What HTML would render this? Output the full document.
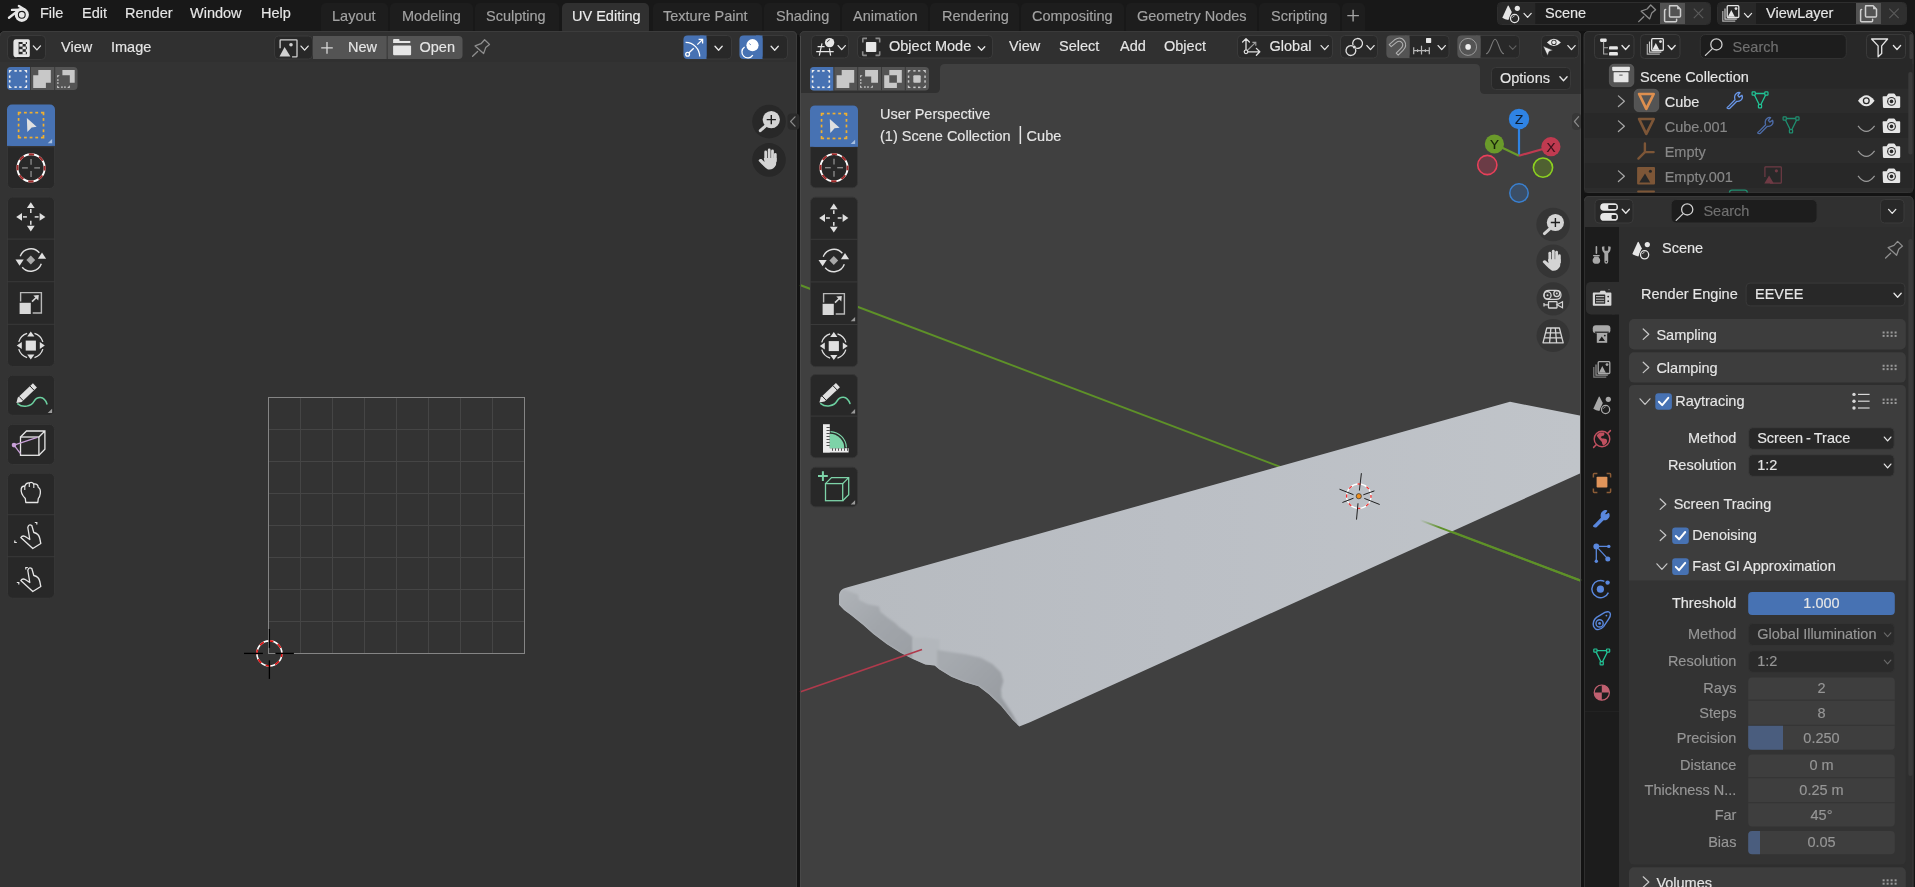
<!DOCTYPE html>
<html><head><meta charset="utf-8"><style>
html,body{margin:0;padding:0;background:#181818;overflow:hidden;}
svg{display:block;will-change:transform;} text{stroke-width:0.15px;} svg{font-family:"Liberation Sans",sans-serif;font-size:14.5px;}
</style></head><body>
<svg width="1915" height="887" viewBox="0 0 1915 887">
<rect x="0" y="0" width="1915" height="887" fill="#131313"/>
<rect x="0" y="0" width="1915" height="31" fill="#181818"/>
<circle cx="21.8" cy="14.8" r="7.1" fill="#e6e6e6"/>
<circle cx="21.8" cy="14.8" r="3.4" fill="#e6e6e6" stroke="#181818" stroke-width="1.1"/>
<path d="M9,17.7 L16.8,11.6" fill="none" stroke="#e6e6e6" stroke-width="2.4" stroke-linecap="round" stroke-linejoin="round"/>
<path d="M12,9.9 L20.5,9.7" fill="none" stroke="#e6e6e6" stroke-width="2.4" stroke-linecap="round" stroke-linejoin="round"/>
<path d="M18.9,6 L25,9.8" fill="none" stroke="#e6e6e6" stroke-width="2.4" stroke-linecap="round" stroke-linejoin="round"/>
<text x="40" y="18.3" fill="#e6e6e6" stroke="#e6e6e6">File</text>
<text x="82" y="18.3" fill="#e6e6e6" stroke="#e6e6e6">Edit</text>
<text x="125" y="18.3" fill="#e6e6e6" stroke="#e6e6e6">Render</text>
<text x="190" y="18.3" fill="#e6e6e6" stroke="#e6e6e6">Window</text>
<text x="261" y="18.3" fill="#e6e6e6" stroke="#e6e6e6">Help</text>
<rect x="321" y="3" width="67" height="32" fill="#1d1d1d" rx="5"/>
<text x="332" y="21" fill="#a3a3a3" stroke="#a3a3a3">Layout</text>
<rect x="390" y="3" width="83" height="32" fill="#1d1d1d" rx="5"/>
<text x="402" y="21" fill="#a3a3a3" stroke="#a3a3a3">Modeling</text>
<rect x="475" y="3" width="84" height="32" fill="#1d1d1d" rx="5"/>
<text x="486" y="21" fill="#a3a3a3" stroke="#a3a3a3">Sculpting</text>
<rect x="562" y="3" width="87" height="32" fill="#303030" rx="5"/>
<text x="572" y="21" fill="#ececec" stroke="#ececec">UV Editing</text>
<rect x="653" y="3" width="109" height="32" fill="#1d1d1d" rx="5"/>
<text x="663" y="21" fill="#a3a3a3" stroke="#a3a3a3">Texture Paint</text>
<rect x="764" y="3" width="76" height="32" fill="#1d1d1d" rx="5"/>
<text x="776" y="21" fill="#a3a3a3" stroke="#a3a3a3">Shading</text>
<rect x="842" y="3" width="86" height="32" fill="#1d1d1d" rx="5"/>
<text x="853" y="21" fill="#a3a3a3" stroke="#a3a3a3">Animation</text>
<rect x="930" y="3" width="89" height="32" fill="#1d1d1d" rx="5"/>
<text x="942" y="21" fill="#a3a3a3" stroke="#a3a3a3">Rendering</text>
<rect x="1021" y="3" width="103" height="32" fill="#1d1d1d" rx="5"/>
<text x="1032" y="21" fill="#a3a3a3" stroke="#a3a3a3">Compositing</text>
<rect x="1126" y="3" width="131" height="32" fill="#1d1d1d" rx="5"/>
<text x="1137" y="21" fill="#a3a3a3" stroke="#a3a3a3">Geometry Nodes</text>
<rect x="1259" y="3" width="81" height="32" fill="#1d1d1d" rx="5"/>
<text x="1271" y="21" fill="#a3a3a3" stroke="#a3a3a3">Scripting</text>
<rect x="1342" y="3" width="23" height="32" fill="#1d1d1d" rx="5"/>
<path d="M1347.3,15.6 h11.6 M1353.1,9.8 v11.6" fill="none" stroke="#a3a3a3" stroke-width="1.4"/>
<rect x="1497.5" y="2.5" width="213" height="22" fill="#1d1d1d" rx="4" stroke="#2e2e2e" stroke-width="1"/>
<rect x="1498" y="3" width="37.5" height="21" fill="#282828" rx="3.5"/>
<rect x="1530" y="3" width="5.5" height="21" fill="#282828"/>
<rect x="1535.5" y="3" width="124.5" height="21" fill="#1d1d1d"/>
<rect x="1660" y="3" width="25" height="21" fill="#525252"/>
<rect x="1685" y="3" width="25" height="21" fill="#2f2f2f" rx="3.5"/>
<rect x="1685" y="3" width="5" height="21" fill="#2f2f2f"/>
<path d="M1507.8,5.7 Q1508.2,5.1 1508.6,5.7 L1511.8,11.9 L1508.4,20.1 Q1505,19.5 1502.3,17.7 Z" fill="#e6e6e6"/>
<circle cx="1517.3" cy="8.3" r="2.6" fill="#e6e6e6"/>
<circle cx="1514.6" cy="18.5" r="5.2" fill="#282828"/>
<circle cx="1514.6" cy="18.5" r="4.1" fill="none" stroke="#e6e6e6" stroke-width="1.3"/>
<path d="M1512.6,17.3 q0.6,-1 1.6,-1.4" fill="none" stroke="#e6e6e6" stroke-width="0.9" stroke-linecap="round" stroke-linejoin="round"/>
<path d="M1524,13.4 L1527.6,17.4 L1531.2,13.4" fill="none" stroke="#e6e6e6" stroke-width="1.2" stroke-linecap="round" stroke-linejoin="round"/>
<text x="1545" y="18.2" fill="#e6e6e6" stroke="#e6e6e6">Scene</text>
<path d="M1650.7,5 L1655.6,9.7 L1651.8,12.9 L1649.7,18.9 L1641.2,11.2 L1647.1,9 Z" fill="none" stroke="#8a8a8a" stroke-width="1.3" stroke-linecap="round" stroke-linejoin="round"/>
<line x1="1638.7" y1="21.6" x2="1643.7" y2="16.8" stroke="#8a8a8a" stroke-width="1.3" stroke-linecap="round"/>
<path d="M1669.6,5.8 h7.5 l3.4,3.4 v6.8 q0,1 -1,1 h-9 q-1,0 -1,-1 v-9.2 q0,-1 1,-1 Z" fill="none" stroke="#cfcfcf" stroke-width="1.5" stroke-linecap="round" stroke-linejoin="round"/>
<path d="M1677.1,5.8 l3.4,3.4 h-3.4 Z" fill="#cfcfcf"/>
<path d="M1665.6,9.6 q-1,0 -1,1 v10.2 q0,1 1,1 h10 q1,0 1,-1 v-1.6" fill="none" stroke="#cfcfcf" stroke-width="1.5" stroke-linecap="round" stroke-linejoin="round"/>
<path d="M1693.8,8.7 L1703.2,18.1 M1703.2,8.7 L1693.8,18.1" fill="none" stroke="#5a5a5a" stroke-width="1.2"/>
<rect x="1717.5" y="2.5" width="189" height="22" fill="#1d1d1d" rx="4" stroke="#2e2e2e" stroke-width="1"/>
<rect x="1718" y="3" width="38" height="21" fill="#282828" rx="3.5"/>
<rect x="1751" y="3" width="5" height="21" fill="#282828"/>
<rect x="1756" y="3" width="100" height="21" fill="#1d1d1d"/>
<rect x="1856" y="3" width="25" height="21" fill="#525252"/>
<rect x="1881" y="3" width="25" height="21" fill="#2f2f2f" rx="3.5"/>
<rect x="1881" y="3" width="5" height="21" fill="#2f2f2f"/>
<path d="M1722.8,11 v10.2 h12.5" fill="none" stroke="#e6e6e6" stroke-width="1.2" opacity="0.7"/>
<path d="M1725,8.6 v10.6 h11.8" fill="none" stroke="#e6e6e6" stroke-width="1.2" opacity="0.85"/>
<rect x="1727.2" y="5.7" width="11.6" height="11.8" fill="#282828" rx="1" stroke="#e6e6e6" stroke-width="1.3"/>
<path d="M1727.9,16.8 L1731.3,10 L1734.8,16.8 Z" fill="#e6e6e6"/>
<circle cx="1736" cy="8.6" r="1.4" fill="#e6e6e6"/>
<path d="M1744.4,13.4 L1748,17.4 L1751.6,13.4" fill="none" stroke="#e6e6e6" stroke-width="1.2" stroke-linecap="round" stroke-linejoin="round"/>
<text x="1766" y="18.2" fill="#e6e6e6" stroke="#e6e6e6">ViewLayer</text>
<path d="M1865.6,5.8 h7.5 l3.4,3.4 v6.8 q0,1 -1,1 h-9 q-1,0 -1,-1 v-9.2 q0,-1 1,-1 Z" fill="none" stroke="#cfcfcf" stroke-width="1.5" stroke-linecap="round" stroke-linejoin="round"/>
<path d="M1873.1,5.8 l3.4,3.4 h-3.4 Z" fill="#cfcfcf"/>
<path d="M1861.6,9.6 q-1,0 -1,1 v10.2 q0,1 1,1 h10 q1,0 1,-1 v-1.6" fill="none" stroke="#cfcfcf" stroke-width="1.5" stroke-linecap="round" stroke-linejoin="round"/>
<path d="M1889.3,8.7 L1898.7,18.1 M1898.7,8.7 L1889.3,18.1" fill="none" stroke="#5a5a5a" stroke-width="1.2"/>
<rect x="0" y="31" width="797" height="900" fill="#333333" rx="5"/>
<rect x="0" y="31" width="797" height="31" fill="#303030" rx="5"/>
<rect x="0" y="40" width="797" height="22" fill="#303030"/>
<path d="M0,36 Q0,31.5 5,31.5 L792,31.5 Q796.5,31.5 796.5,36 L796.5,887" fill="none" stroke="#3c3c3c" stroke-width="1"/>
<rect x="7.5" y="35.5" width="38" height="24" fill="#282828" rx="4" stroke="#3a3a3a" stroke-width="1"/>
<path d="M14.6,39.2 h13.6 q1.6,0 1.6,1.6 v14.6 q0,1.6 -1.6,1.6 h-11.2 v-2.8 h9.9 v-12.2 h-8.3 v12.2 q0,3 -2.6,3 q-2.6,0 -2.6,-3 v-11.7 q0,-3.3 2.6,-3.3 Z" fill="#e6e6e6"/>
<rect x="22.6" y="41.4" width="3.2" height="2.6" fill="#e6e6e6"/>
<rect x="19.4" y="44" width="3.2" height="2.6" fill="#e6e6e6"/>
<rect x="25.8" y="44" width="3.2" height="2.6" fill="#e6e6e6"/>
<rect x="22.6" y="46.6" width="3.2" height="2.6" fill="#e6e6e6"/>
<rect x="19.4" y="49.2" width="3.2" height="2.6" fill="#e6e6e6"/>
<rect x="25.8" y="49.2" width="3.2" height="2.6" fill="#e6e6e6"/>
<rect x="22.6" y="51.8" width="3.2" height="2.6" fill="#e6e6e6"/>
<path d="M33.3,45.9 L36.9,49.9 L40.5,45.9" fill="none" stroke="#e6e6e6" stroke-width="1.3" stroke-linecap="round" stroke-linejoin="round"/>
<text x="61" y="51.5" fill="#e6e6e6" stroke="#e6e6e6">View</text>
<text x="111" y="51.5" fill="#e6e6e6" stroke="#e6e6e6">Image</text>
<rect x="274.5" y="36" width="38" height="23" fill="#282828" rx="4" stroke="#3a3a3a" stroke-width="1"/>
<path d="M280.1,48.3 V40.5 q0,-0.6 0.6,-0.6 h15.7 q0.6,0 0.6,0.6 v15.8 q0,0.6 -0.6,0.6 h-4.3" fill="none" stroke="#d0d0d0" stroke-width="1.3"/>
<path d="M279.5,56.6 L284.6,47.1 L290.4,56.6 Z" fill="#d0d0d0"/>
<circle cx="291" cy="44.8" r="1.8" fill="#d0d0d0"/>
<path d="M301,46.1 L304.6,50.1 L308.2,46.1" fill="none" stroke="#e6e6e6" stroke-width="1.3" stroke-linecap="round" stroke-linejoin="round"/>
<rect x="313" y="36" width="74" height="23" fill="#545454"/>
<rect x="387.5" y="36" width="75" height="23" fill="#545454" rx="4"/>
<rect x="387.5" y="36" width="8" height="23" fill="#545454"/>
<rect x="386.6" y="36" width="1" height="23" fill="#3a3a3a"/>
<path d="M321.2,47.9 h11.6 M327,42.1 v11.6" fill="none" stroke="#d8d8d8" stroke-width="1.3"/>
<text x="348" y="51.5" fill="#e6e6e6" stroke="#e6e6e6">New</text>
<text x="419.5" y="51.5" fill="#e6e6e6" stroke="#e6e6e6">Open</text>
<path d="M393.1,41.8 V40 q0,-0.9 0.9,-0.9 h4.6 q0.9,0 0.9,0.9 v1 h10.8 v2.1 h-17.2 Z" fill="#e6e6e6"/>
<rect x="393.1" y="45.4" width="18" height="9.9" fill="#e6e6e6" rx="1"/>
<path d="M484.6,39.7 L489.5,44.4 L485.7,47.6 L483.6,53.6 L475.1,45.9 L481,43.7 Z" fill="none" stroke="#8f8f8f" stroke-width="1.3" stroke-linecap="round" stroke-linejoin="round"/>
<line x1="472.6" y1="56.3" x2="477.6" y2="51.5" stroke="#8f8f8f" stroke-width="1.3" stroke-linecap="round"/>
<rect x="683.5" y="35.5" width="48" height="23.5" fill="#282828" rx="4" stroke="#3a3a3a" stroke-width="1"/>
<rect x="683.5" y="35.5" width="23" height="23.5" fill="#4772b3" rx="4"/>
<rect x="700" y="35.5" width="6.5" height="23.5" fill="#4772b3"/>
<path d="M685.6,42.4 A14.2,14.2 0 0 1 699.7,56.6" fill="none" stroke="#ffffff" stroke-width="1.3"/>
<circle cx="687.6" cy="54.2" r="1.9" fill="none" stroke="#ffffff" stroke-width="1.3"/>
<line x1="689" y1="52.8" x2="693.7" y2="48.2" stroke="#ffffff" stroke-width="1.3"/>
<line x1="697.3" y1="44.6" x2="702.3" y2="39.7" stroke="#ffffff" stroke-width="1.3"/>
<path d="M698.6,39.4 h4 v4" fill="none" stroke="#ffffff" stroke-width="1.3"/>
<path d="M715,46.2 L718.6,50.2 L722.2,46.2" fill="none" stroke="#e6e6e6" stroke-width="1.3" stroke-linecap="round" stroke-linejoin="round"/>
<rect x="739.5" y="35.5" width="48" height="23.5" fill="#282828" rx="4" stroke="#3a3a3a" stroke-width="1"/>
<rect x="739.5" y="35.5" width="23" height="23.5" fill="#4772b3" rx="4"/>
<rect x="756" y="35.5" width="6.5" height="23.5" fill="#4772b3"/>
<circle cx="752.5" cy="45.2" r="6.1" fill="#ffffff"/>
<path d="M744.6,47 A5.9,5.9 0 1 0 752.8,55.1" fill="none" stroke="#ffffff" stroke-width="1.3"/>
<path d="M749.3,43.6 l1.5,1.2" fill="none" stroke="#4772b3" stroke-width="0.9"/>
<path d="M771.1,46.2 L774.7,50.2 L778.3,46.2" fill="none" stroke="#e6e6e6" stroke-width="1.3" stroke-linecap="round" stroke-linejoin="round"/>
<rect x="7" y="67" width="70.5" height="23" fill="#545454" rx="4"/>
<rect x="7" y="67" width="23" height="23" fill="#4772b3" rx="4"/>
<rect x="26" y="67" width="4" height="23" fill="#4772b3"/>
<rect x="30" y="67" width="1" height="23" fill="#3a3a3a"/>
<rect x="54.2" y="67" width="1" height="23" fill="#3a3a3a"/>
<path d="M8.9,70.1 h3.1 l-3.1,3.1 Z" fill="#f0f0f0"/>
<path d="M27.1,70.1 v3.1 l-3.1,-3.1 Z" fill="#f0f0f0"/>
<path d="M8.9,87.9 v-3.1 l3.1,3.1 Z" fill="#f0f0f0"/>
<path d="M27.1,87.9 h-3.1 l3.1,-3.1 Z" fill="#f0f0f0"/>
<rect x="14.4" y="70.1" width="2.4" height="1.6" fill="#f0f0f0"/>
<rect x="14.4" y="86.3" width="2.4" height="1.6" fill="#f0f0f0"/>
<rect x="8.9" y="75.52" width="1.6" height="2.32" fill="#f0f0f0"/>
<rect x="25.5" y="75.52" width="1.6" height="2.32" fill="#f0f0f0"/>
<rect x="19.2" y="70.1" width="2.4" height="1.6" fill="#f0f0f0"/>
<rect x="19.2" y="86.3" width="2.4" height="1.6" fill="#f0f0f0"/>
<rect x="8.9" y="80.16" width="1.6" height="2.32" fill="#f0f0f0"/>
<rect x="25.5" y="80.16" width="1.6" height="2.32" fill="#f0f0f0"/>
<path d="M33.2,75.2 h5.1 v-5.1 h12.5 v12.7 h-4.9 v5.1 h-12.7 Z" fill="#c8c8c8"/>
<path d="M62.4,70.1 h12.3 v12.7 h-4.9 v-7.6 h-7.4 Z" fill="#c8c8c8"/>
<path d="M57.1,75.2 h2.6 l-2.6,2.6 Z" fill="#c8c8c8"/>
<path d="M57.1,87.9 v-2.6 l2.6,2.6 Z" fill="#c8c8c8"/>
<path d="M69.8,87.9 h-2.6 l2.6,-2.6 Z" fill="#c8c8c8"/>
<rect x="61.2" y="86.4" width="1.5" height="1.5" fill="#c8c8c8"/>
<rect x="57.1" y="79.3" width="1.5" height="1.5" fill="#c8c8c8"/>
<rect x="64.2" y="86.4" width="1.5" height="1.5" fill="#c8c8c8"/>
<rect x="57.1" y="82.3" width="1.5" height="1.5" fill="#c8c8c8"/>
<rect x="7.5" y="105" width="47" height="83.5" fill="#282828" rx="5" stroke="#363636" stroke-width="1"/>
<rect x="7" y="146.25" width="48" height="1" fill="#3a3a3a"/>
<rect x="7.5" y="197" width="47" height="169.4" fill="#282828" rx="5" stroke="#363636" stroke-width="1"/>
<rect x="7" y="238.6" width="48" height="1" fill="#3a3a3a"/>
<rect x="7" y="281.2" width="48" height="1" fill="#3a3a3a"/>
<rect x="7" y="323.8" width="48" height="1" fill="#3a3a3a"/>
<rect x="7.5" y="375.2" width="47" height="40.1" fill="#282828" rx="5" stroke="#363636" stroke-width="1"/>
<rect x="7.5" y="424.4" width="47" height="40.1" fill="#282828" rx="5" stroke="#363636" stroke-width="1"/>
<rect x="7.5" y="473.2" width="47" height="125" fill="#282828" rx="5" stroke="#363636" stroke-width="1"/>
<rect x="7" y="514.2" width="48" height="1" fill="#3a3a3a"/>
<rect x="7" y="556.2" width="48" height="1" fill="#3a3a3a"/>
<rect x="7" y="104.5" width="48" height="41.4" fill="#4772b3" rx="5"/>
<rect x="7" y="134" width="48" height="11.9" fill="#4772b3"/>
<path d="M18.6,115.2 V112.65 H21.15 M40.95,112.65 H43.5 V115.2 M43.5,135 V137.55 H40.95 M21.15,137.55 H18.6 V135" fill="none" stroke="#f0b030" stroke-width="1.7"/>
<rect x="23.98" y="111.8" width="2.83" height="1.7" fill="#f0b030"/>
<rect x="23.98" y="136.7" width="2.83" height="1.7" fill="#f0b030"/>
<rect x="17.75" y="118.03" width="1.7" height="2.83" fill="#f0b030"/>
<rect x="42.65" y="118.03" width="1.7" height="2.83" fill="#f0b030"/>
<rect x="29.64" y="111.8" width="2.83" height="1.7" fill="#f0b030"/>
<rect x="29.64" y="136.7" width="2.83" height="1.7" fill="#f0b030"/>
<rect x="17.75" y="123.69" width="1.7" height="2.83" fill="#f0b030"/>
<rect x="42.65" y="123.69" width="1.7" height="2.83" fill="#f0b030"/>
<rect x="35.29" y="111.8" width="2.83" height="1.7" fill="#f0b030"/>
<rect x="35.29" y="136.7" width="2.83" height="1.7" fill="#f0b030"/>
<rect x="17.75" y="129.34" width="1.7" height="2.83" fill="#f0b030"/>
<rect x="42.65" y="129.34" width="1.7" height="2.83" fill="#f0b030"/>
<path d="M26.85,118 L36.65,126.8 L31.65,127.4 L27.35,132.1 Z" fill="#e0e0e0"/>
<path d="M52.1,139 L52.1,143.3 L47.7,143.3 Z" fill="#a8c0e0"/>
<circle cx="31.05" cy="167.9" r="13.6" fill="none" stroke="#ffffff" stroke-width="1.9"/>
<circle cx="31.05" cy="167.9" r="13.6" fill="none" stroke="#a02a2a" stroke-width="1.9" stroke-dasharray="5.34" stroke-dashoffset="2.67"/>
<line x1="22.05" y1="167.9" x2="27.85" y2="167.9" stroke="#8f8f8f" stroke-width="1.3"/>
<line x1="34.25" y1="167.9" x2="40.05" y2="167.9" stroke="#8f8f8f" stroke-width="1.3"/>
<line x1="31.05" y1="158.9" x2="31.05" y2="164.7" stroke="#8f8f8f" stroke-width="1.3"/>
<line x1="31.05" y1="171.1" x2="31.05" y2="176.9" stroke="#8f8f8f" stroke-width="1.3"/>
<path d="M30.8,202.3 L26.9,208.1 L34.7,208.1 Z" fill="#e0e0e0"/>
<line x1="30.8" y1="209.1" x2="30.8" y2="213" stroke="#e0e0e0" stroke-width="1.5"/>
<path d="M30.8,231.5 L26.9,225.7 L34.7,225.7 Z" fill="#e0e0e0"/>
<line x1="30.8" y1="224.7" x2="30.8" y2="220.8" stroke="#e0e0e0" stroke-width="1.5"/>
<path d="M16.2,216.9 L22,213 L22,220.8 Z" fill="#e0e0e0"/>
<line x1="23" y1="216.9" x2="26.9" y2="216.9" stroke="#e0e0e0" stroke-width="1.5"/>
<path d="M45.4,216.9 L39.6,213 L39.6,220.8 Z" fill="#e0e0e0"/>
<line x1="38.6" y1="216.9" x2="34.7" y2="216.9" stroke="#e0e0e0" stroke-width="1.5"/>
<path d="M20.28,256.17 A11.2,11.2 0 0 1 39.38,252.8" fill="none" stroke="#e0e0e0" stroke-width="1.4"/>
<path d="M41.32,263.83 A11.2,11.2 0 0 1 22.22,267.2" fill="none" stroke="#e0e0e0" stroke-width="1.4"/>
<path d="M15.5,259.5 h8.2 l-4.1,6.2 Z" fill="#e0e0e0"/>
<path d="M46.1,258.8 h-8.2 l4.1,-6.2 Z" fill="#e0e0e0"/>
<path d="M30.8,255.6 L35.2,260 L30.8,264.4 L26.4,260 Z" fill="#a8a8a8"/>
<path d="M20.6,301.5 V292.6 H41.4 V313 H32.7" fill="none" stroke="#b8b8b8" stroke-width="1.4"/>
<rect x="19.6" y="302.8" width="11.2" height="11.2" fill="#d8d8d8"/>
<line x1="32" y1="301.6" x2="37.1" y2="296.7" stroke="#d8d8d8" stroke-width="1.5"/>
<path d="M38.8,295 L38.3,300.5 L33.3,295.5 Z" fill="#d8d8d8"/>
<path d="M42.85,341.82 A12.6,12.6 0 0 0 34.48,333.45" fill="none" stroke="#e0e0e0" stroke-width="1.3"/>
<path d="M27.12,333.45 A12.6,12.6 0 0 0 18.75,341.82" fill="none" stroke="#e0e0e0" stroke-width="1.3"/>
<path d="M18.75,349.18 A12.6,12.6 0 0 0 27.12,357.55" fill="none" stroke="#e0e0e0" stroke-width="1.3"/>
<path d="M34.48,357.55 A12.6,12.6 0 0 0 42.85,349.18" fill="none" stroke="#e0e0e0" stroke-width="1.3"/>
<rect x="25.7" y="340.6" width="10.2" height="10" fill="#e0e0e0"/>
<path d="M30.8,331.5 l3.6,5 h-7.2 Z M30.8,359.5 l3.6,-5 h-7.2 Z M16.8,345.5 l5,3.6 v-7.2 Z M44.8,345.5 l-5,3.6 v-7.2 Z" fill="#e0e0e0"/>
<path d="M16.4,402.9 L21.66,401.92 L36.93,387.49 L32.94,383.28 L17.68,397.7 Z" fill="#e0e0e0"/>
<line x1="23.12" y1="400.54" x2="19.13" y2="396.33" stroke="#282828" stroke-width="1"/>
<line x1="34.02" y1="390.24" x2="30.03" y2="386.03" stroke="#282828" stroke-width="1"/>
<path d="M17.8,403.9 C23,408.3 31,406.3 34,401.3 C37,396.3 44,395.3 47,403.9" fill="none" stroke="#6cd0a0" stroke-width="1.5" stroke-linecap="round" stroke-linejoin="round"/>
<path d="M52.1,408.8 L52.1,413.1 L47.7,413.1 Z" fill="#9a9a9a"/>
<rect x="20.5" y="437" width="18.4" height="18.3" fill="none" stroke="#e6e6e6" stroke-width="1.3"/>
<path d="M20.5,437 l6,-6 h18.4 v18.3 l-6,6 M38.9,437 l6,-6" fill="none" stroke="#e6e6e6" stroke-width="1.3"/>
<line x1="14" y1="445.1" x2="37.3" y2="437.3" stroke="#c8a0d8" stroke-width="1.3"/>
<line x1="14" y1="445.1" x2="20.5" y2="453.7" stroke="#c8a0d8" stroke-width="1.3"/>
<circle cx="14" cy="445.1" r="2.3" fill="#c8a0d8"/>
<path d="M25.8,502.5 L25.3,498.5 Q20.3,493.5 21.3,488.5 Q21.8,486 24.8,486 Q26.3,482.5 29.3,483 Q31.8,481.5 33.8,484 Q37.8,483.5 38.3,487.5 Q40.8,488.5 40.3,493.5 Q39.8,497.5 38.3,498.5 L37.8,502.5 Z" fill="none" stroke="#e6e6e6" stroke-width="1.3" stroke-linecap="round" stroke-linejoin="round"/>
<path d="M24.8,486 v4 M29.3,483 v4 M33.8,484 v4" fill="none" stroke="#e6e6e6" stroke-width="1.1"/>
<path d="M20.8,537.5 Q22.8,534.5 26.8,537.5 L29.8,539.5 L27.8,527.5 Q28.8,523.5 31.8,525.5 L33.8,532.5 Q38.8,533.5 39.8,538.5 L40.8,543.5 L32.8,548.5 Z" fill="none" stroke="#e6e6e6" stroke-width="1.3" stroke-linecap="round" stroke-linejoin="round"/>
<path d="M34.8,522.5 h2 v2 M14.8,540.5 v2 h2" fill="none" stroke="#e6e6e6" stroke-width="1.2"/>
<path d="M20.8,580.5 Q22.8,577.5 26.8,580.5 L29.8,582.5 L27.8,570.5 Q28.8,566.5 31.8,568.5 L33.8,575.5 Q38.8,576.5 39.8,581.5 L40.8,586.5 L32.8,591.5 Z" fill="none" stroke="#e6e6e6" stroke-width="1.3" stroke-linecap="round" stroke-linejoin="round"/>
<path d="M25.8,569.5 v-2 h2 M16.8,582.5 h2 v2" fill="none" stroke="#e6e6e6" stroke-width="1.2"/>
<rect x="300" y="397" width="1" height="256" fill="#454545"/>
<rect x="268" y="429" width="256" height="1" fill="#454545"/>
<rect x="332" y="397" width="1" height="256" fill="#454545"/>
<rect x="268" y="461" width="256" height="1" fill="#454545"/>
<rect x="364" y="397" width="1" height="256" fill="#454545"/>
<rect x="268" y="493" width="256" height="1" fill="#454545"/>
<rect x="396" y="397" width="1" height="256" fill="#454545"/>
<rect x="268" y="525" width="256" height="1" fill="#454545"/>
<rect x="428" y="397" width="1" height="256" fill="#454545"/>
<rect x="268" y="557" width="256" height="1" fill="#454545"/>
<rect x="460" y="397" width="1" height="256" fill="#454545"/>
<rect x="268" y="589" width="256" height="1" fill="#454545"/>
<rect x="492" y="397" width="1" height="256" fill="#454545"/>
<rect x="268" y="621" width="256" height="1" fill="#454545"/>
<rect x="268.5" y="397.5" width="256" height="256" fill="none" stroke="#858585" stroke-width="1"/>
<circle cx="269.4" cy="653.4" r="12.5" fill="none" stroke="#ffffff" stroke-width="1.6"/>
<circle cx="269.4" cy="653.4" r="12.5" fill="none" stroke="#e01010" stroke-width="1.6" stroke-dasharray="4.91" stroke-dashoffset="1.23"/>
<line x1="244" y1="653.4" x2="262.9" y2="653.4" stroke="#000000" stroke-width="1.3"/>
<line x1="275.4" y1="653.4" x2="293.9" y2="653.4" stroke="#000000" stroke-width="1.3"/>
<line x1="269.4" y1="629" x2="269.4" y2="647.9" stroke="#000000" stroke-width="1.3"/>
<line x1="269.4" y1="660.3" x2="269.4" y2="678.9" stroke="#000000" stroke-width="1.3"/>
<circle cx="769" cy="121.6" r="16.8" fill="#282828"/>
<circle cx="771.3" cy="119.6" r="8.6" fill="#d4d4d4"/>
<path d="M766.7,119.6 h9.2 M771.3,115 v9.2" fill="none" stroke="#1e1e1e" stroke-width="1.4"/>
<line x1="760.3" y1="130.7" x2="765.6" y2="125.9" stroke="#d4d4d4" stroke-width="3" stroke-linecap="round"/>
<circle cx="769" cy="159.9" r="16.8" fill="#282828"/>
<line x1="765.7" y1="151.9" x2="765.7" y2="158.9" stroke="#d4d4d4" stroke-width="2.8" stroke-linecap="round"/>
<line x1="769.2" y1="149.9" x2="769.2" y2="158.9" stroke="#d4d4d4" stroke-width="2.8" stroke-linecap="round"/>
<line x1="772.5" y1="150.9" x2="772.5" y2="158.9" stroke="#d4d4d4" stroke-width="2.8" stroke-linecap="round"/>
<line x1="775.3" y1="154.4" x2="775.3" y2="160.9" stroke="#d4d4d4" stroke-width="2.8" stroke-linecap="round"/>
<path d="M763.8,157.9 L776.6,157.9 L776,164.9 Q773,170.4 768,169.4 Q765,167.9 758.5,160.7 Q759,158.4 761.5,159.1 L764.5,161.9 Z" fill="#d4d4d4"/>
<rect x="787.5" y="113.4" width="12" height="16.3" fill="#2a2a2a" rx="4"/>
<path d="M795,116.8 L790.6,121.5 L795,126.2" fill="none" stroke="#8a8a8a" stroke-width="1.2" stroke-linecap="round" stroke-linejoin="round"/>
<rect x="800" y="31" width="781" height="900" fill="#404040" rx="5"/>
<line x1="800" y1="285" x2="1581" y2="580.7" stroke="#5e9128" stroke-width="2"/>
<defs><linearGradient id="slabg" x1="839" y1="0" x2="1581" y2="0" gradientUnits="userSpaceOnUse"><stop offset="0" stop-color="#b7bbc0"/><stop offset="0.45" stop-color="#bbbfc5"/><stop offset="1" stop-color="#c0c4c9"/></linearGradient><linearGradient id="sideg" x1="0" y1="0" x2="0.25" y2="1"><stop offset="0" stop-color="#b4b8bd"/><stop offset="0.6" stop-color="#a3a7ac"/><stop offset="1" stop-color="#9a9ea3"/></linearGradient><radialGradient id="shade" cx="930" cy="640" r="120" gradientUnits="userSpaceOnUse"><stop offset="0" stop-color="#9da1a6" stop-opacity="0.35"/><stop offset="1" stop-color="#9da1a6" stop-opacity="0"/></radialGradient><filter id="soft" x="-5%" y="-5%" width="110%" height="110%"><feGaussianBlur stdDeviation="0.9"/></filter></defs>
<path d="M846,587.8 L1510,401.8 L1581,415.8 L1581,473 L1030,722.3 L1019.3,726.4 L1012.8,720 L1001,705.7 L989.2,694.5 L978.5,686.2 L964.3,682.1 L951.3,676.7 L939.5,669.6 L934.7,665.5 L925.3,664.5 L912.9,658.9 L900.5,652.7 L887,644.2 L873.4,634.1 L863.3,625.1 L850.9,614.9 L844.1,609.9 L839.1,604.8 L839.1,594.7 Q840,589.2 846,587.8 Z" fill="url(#slabg)"/>
<clipPath id="slabclip"><path d="M846,587.8 L1510,401.8 L1581,415.8 L1581,473 L1030,722.3 L1019.3,726.4 L1012.8,720 L1001,705.7 L989.2,694.5 L978.5,686.2 L964.3,682.1 L951.3,676.7 L939.5,669.6 L934.7,665.5 L925.3,664.5 L912.9,658.9 L900.5,652.7 L887,644.2 L873.4,634.1 L863.3,625.1 L850.9,614.9 L844.1,609.9 L839.1,604.8 L839.1,594.7 Q840,589.2 846,587.8 Z"/></clipPath>
<g clip-path="url(#slabclip)">
<linearGradient id="sideA" x1="845" y1="595" x2="905" y2="655" gradientUnits="userSpaceOnUse"><stop offset="0" stop-color="#adb1b6"/><stop offset="0.5" stop-color="#a2a6ab"/><stop offset="1" stop-color="#9ca0a5"/></linearGradient>
<linearGradient id="sideB" x1="950" y1="655" x2="1010" y2="715" gradientUnits="userSpaceOnUse"><stop offset="0" stop-color="#a6aaaf"/><stop offset="0.6" stop-color="#9ca0a5"/><stop offset="1" stop-color="#95999e"/></linearGradient>
<path d="M843,589 L839.1,594.7 L839.1,604.8 L844.1,609.9 L850.9,614.9 L863.3,625.1 L873.4,634.1 L887,644.2 L900.5,652.7 L912.9,658.9 L912.9,637.5 L906.1,631.8 L899.4,627.3 L894.9,622.8 L887,617.2 L880.2,611.6 L879.1,606.5 L867.8,604.2 L858.8,599.7 L858.2,594.7 Z" fill="url(#sideA)" filter="url(#soft)"/>
<path d="M912.9,637.5 L924.2,637.5 L939.5,639.5 L939.5,669.6 L934.7,665.5 L925.3,664.5 L912.9,658.9 Z" fill="#b3b7bc" filter="url(#soft)"/>
<path d="M937.1,650.1 L941.8,650.7 L965.5,654.3 L980.9,657.8 L992.7,664.3 L1001,672.6 L1003.4,680.9 L1001,689.2 L1001.6,697.5 L1011.7,712.8 L1019.3,726.4 L1012.8,720 L1001,705.7 L989.2,694.5 L978.5,686.2 L964.3,682.1 L951.3,676.7 L939.5,669.6 L937.1,667 Z" fill="url(#sideB)" filter="url(#soft)"/>
</g>
<line x1="800" y1="692" x2="922" y2="649.5" stroke="#b03a4c" stroke-width="1.8"/>
<linearGradient id="gfade" x1="1420" y1="0" x2="1440" y2="0" gradientUnits="userSpaceOnUse"><stop offset="0" stop-color="#5e9128" stop-opacity="0"/><stop offset="1" stop-color="#5e9128"/></linearGradient>
<line x1="1420" y1="520.1" x2="1581" y2="580.7" stroke="url(#gfade)" stroke-width="2"/>
<circle cx="1358.8" cy="496.2" r="12.2" fill="none" stroke="#ffffff" stroke-width="1.3"/>
<circle cx="1358.8" cy="496.2" r="12.2" fill="none" stroke="#f03030" stroke-width="1.3" stroke-dasharray="3.4 6.18" stroke-dashoffset="1.7"/>
<line x1="1361.4" y1="473.2" x2="1359.4" y2="490.5" stroke="#202020" stroke-width="1"/>
<line x1="1358" y1="503.3" x2="1356.5" y2="519.6" stroke="#202020" stroke-width="1"/>
<line x1="1339.5" y1="489.2" x2="1353.5" y2="494.7" stroke="#202020" stroke-width="1"/>
<line x1="1342.4" y1="502.5" x2="1353.5" y2="498.2" stroke="#202020" stroke-width="1"/>
<line x1="1363.3" y1="494.8" x2="1374.4" y2="490.9" stroke="#202020" stroke-width="1"/>
<line x1="1364.3" y1="498.4" x2="1379.7" y2="504.5" stroke="#202020" stroke-width="1"/>
<circle cx="1358.8" cy="496.2" r="2.6" fill="#f0901e" stroke="#303030" stroke-width="0.7"/>
<path d="M800,36 Q800,31 805,31 L1576,31 Q1581,31 1581,36 L1581,94 L1485,94 Q1480,94 1480,89 L1480,69 Q1480,64 1475,64 L945,64 Q940,64 940,69 L940,88 Q940,93 935,93 L800,93 Z" fill="#303030"/>
<path d="M800,36.5 Q800,31.5 805,31.5 L1576,31.5 Q1580.5,31.5 1580.5,36 L1580.5,887" fill="none" stroke="#3a3a3a" stroke-width="1"/>
<line x1="1580.5" y1="94" x2="1580.5" y2="887" stroke="#4a4a4a" stroke-width="1"/>
<line x1="800.5" y1="36" x2="800.5" y2="887" stroke="#494949" stroke-width="1"/>
<rect x="811.5" y="35.5" width="37" height="22.5" fill="#282828" rx="4" stroke="#3a3a3a" stroke-width="1"/>
<circle cx="829.6" cy="42.6" r="4.7" fill="#e6e6e6"/>
<path d="M827.4,41.8 q0.6,-1.6 2,-2" fill="none" stroke="#282828" stroke-width="0.9" stroke-linecap="round" stroke-linejoin="round"/>
<path d="M817.6,46.6 h7 M816.2,51.6 h17.5 M822,43.4 L819.3,55.6 M829.4,48.4 L830.6,55.6" fill="none" stroke="#e6e6e6" stroke-width="1.2"/>
<path d="M838.1,45.6 L841.7,49.6 L845.3,45.6" fill="none" stroke="#e6e6e6" stroke-width="1.3" stroke-linecap="round" stroke-linejoin="round"/>
<rect x="857.5" y="35.5" width="135" height="22.5" fill="#282828" rx="4" stroke="#3a3a3a" stroke-width="1"/>
<path d="M862.8,42.6 v-3.6 q0,-0.6 0.6,-0.6 h3.6 M875.5,38.4 h3.6 q0.6,0 0.6,0.6 v3.6 M879.7,51.2 v3.6 q0,0.6 -0.6,0.6 h-3.6 M866.9,55.4 h-3.6 q-0.6,0 -0.6,-0.6 v-3.6" fill="none" stroke="#8a8a8a" stroke-width="1.6"/>
<rect x="865.9" y="41.9" width="10.4" height="10.2" fill="#e6e6e6" rx="0.8"/>
<text x="889" y="51" fill="#e6e6e6" stroke="#e6e6e6">Object Mode</text>
<path d="M978.2,46.7 L981.5,50.3 L984.8,46.7" fill="none" stroke="#e6e6e6" stroke-width="1.3" stroke-linecap="round" stroke-linejoin="round"/>
<text x="1009" y="51" fill="#e6e6e6" stroke="#e6e6e6">View</text>
<text x="1059" y="51" fill="#e6e6e6" stroke="#e6e6e6">Select</text>
<text x="1120" y="51" fill="#e6e6e6" stroke="#e6e6e6">Add</text>
<text x="1164" y="51" fill="#e6e6e6" stroke="#e6e6e6">Object</text>
<rect x="1237.5" y="35.5" width="95" height="22.5" fill="#282828" rx="4" stroke="#3a3a3a" stroke-width="1"/>
<text x="1269.5" y="51" fill="#e6e6e6" stroke="#e6e6e6">Global</text>
<path d="M1246,51.8 V38.8 M1242.6,42 L1246,38.6 L1249.4,42 M1246,51.8 H1259.6 M1256.4,48.4 L1259.8,51.8 L1256.4,55.2" fill="none" stroke="#e0e0e0" stroke-width="1.3" stroke-linecap="round" stroke-linejoin="round"/>
<line x1="1247.3" y1="50.5" x2="1255.6" y2="42.3" stroke="#a0a0a0" stroke-width="1.1"/>
<path d="M1252.4,42.4 h3.4 v3.4" fill="none" stroke="#a0a0a0" stroke-width="1.1"/>
<circle cx="1246" cy="51.8" r="1.8" fill="#282828" stroke="#e0e0e0" stroke-width="1.2"/>
<path d="M1321.1,45.6 L1324.7,49.6 L1328.3,45.6" fill="none" stroke="#e6e6e6" stroke-width="1.3" stroke-linecap="round" stroke-linejoin="round"/>
<rect x="1340.5" y="35.5" width="37" height="22.5" fill="#282828" rx="4" stroke="#3a3a3a" stroke-width="1"/>
<path d="M1353.20,46.27 A4.9,4.9 0 1 0 1355.44,48.76" fill="none" stroke="#e0e0e0" stroke-width="1.3"/>
<path d="M1355.30,47.73 A4.9,4.9 0 1 0 1353.06,45.24" fill="none" stroke="#e0e0e0" stroke-width="1.3"/>
<circle cx="1354.3" cy="46.9" r="1.5" fill="#e0e0e0"/>
<path d="M1366.9,45.6 L1370.5,49.6 L1374.1,45.6" fill="none" stroke="#e6e6e6" stroke-width="1.3" stroke-linecap="round" stroke-linejoin="round"/>
<rect x="1386.5" y="35.5" width="62.5" height="22.5" fill="#282828" rx="4" stroke="#3a3a3a" stroke-width="1"/>
<rect x="1386.5" y="35.5" width="23" height="22.5" fill="#545454" rx="4"/>
<rect x="1405" y="35.5" width="4.5" height="22.5" fill="#545454"/>
<path d="M1389.2,44.6 L1394.6,39.8 Q1400.8,35.6 1404.6,41.2 Q1407.4,45.8 1403,50.4 L1398.2,55.2 L1396.2,53.2 L1401,48.4 Q1403.8,45.4 1402.2,43 Q1399.8,39.8 1396.4,42.4 L1391.2,46.6 Z" fill="none" stroke="#b0b0b0" stroke-width="1.1" stroke-linecap="round" stroke-linejoin="round"/>
<path d="M1413.7,47.2 v7 M1429.3,47.2 v7 M1421.5,45.8 v8.6 M1413.7,50.6 h15.6 M1417.6,49.2 v2.8 M1425.4,49.2 v2.8" fill="none" stroke="#b8b8b8" stroke-width="1.2"/>
<rect x="1426" y="38.1" width="5.2" height="4.8" fill="#e6e6e6" rx="0.6"/>
<path d="M1438.1,45.6 L1441.7,49.6 L1445.3,45.6" fill="none" stroke="#e6e6e6" stroke-width="1.3" stroke-linecap="round" stroke-linejoin="round"/>
<rect x="1457.5" y="35.5" width="62" height="22.5" fill="#282828" rx="4" stroke="#3a3a3a" stroke-width="1"/>
<rect x="1457.5" y="35.5" width="23" height="22.5" fill="#545454" rx="4"/>
<rect x="1476" y="35.5" width="4.5" height="22.5" fill="#545454"/>
<circle cx="1468.1" cy="46.9" r="8.5" fill="none" stroke="#9a9a9a" stroke-width="1"/>
<circle cx="1468.1" cy="46.9" r="2.8" fill="#eeeeee"/>
<path d="M1486,53.8 C1490.5,53.8 1492,39.2 1495.1,39.2 C1498.2,39.2 1499.5,53.8 1504,53.8" fill="none" stroke="#7a7a7a" stroke-width="1.1"/>
<path d="M1509.4,45.8 L1512.7,49.4 L1516,45.8" fill="none" stroke="#606060" stroke-width="1.1" stroke-linecap="round" stroke-linejoin="round"/>
<rect x="1541.5" y="35.5" width="37" height="22.5" fill="#282828" rx="4" stroke="#3a3a3a" stroke-width="1"/>
<path d="M1546.9,42.4 Q1553.9,35.2 1560.9,42.4 Q1553.9,49.6 1546.9,42.4 Z" fill="#e6e6e6"/>
<circle cx="1553.9" cy="42.4" r="2.6" fill="#282828"/>
<circle cx="1553.9" cy="42.4" r="1.8" fill="#e6e6e6"/>
<path d="M1543.1,46.1 L1553,50.3 L1549.2,51.4 L1547.5,55.8 Z" fill="#e6e6e6" stroke="#282828" stroke-width="0.6"/>
<path d="M1567.9,45.6 L1571.5,49.6 L1575.1,45.6" fill="none" stroke="#e6e6e6" stroke-width="1.3" stroke-linecap="round" stroke-linejoin="round"/>
<rect x="810" y="67" width="119" height="23.5" fill="#545454" rx="4"/>
<rect x="810" y="67" width="23.5" height="23.5" fill="#4772b3" rx="4"/>
<rect x="829" y="67" width="4.5" height="23.5" fill="#4772b3"/>
<rect x="833.4" y="67" width="1" height="23.5" fill="#3a3a3a"/>
<rect x="857.2" y="67" width="1" height="23.5" fill="#3a3a3a"/>
<rect x="881" y="67" width="1" height="23.5" fill="#3a3a3a"/>
<rect x="904.8" y="67" width="1" height="23.5" fill="#3a3a3a"/>
<path d="M811.8,70.1 h3.1 l-3.1,3.1 Z" fill="#f0f0f0"/>
<path d="M830.1,70.1 v3.1 l-3.1,-3.1 Z" fill="#f0f0f0"/>
<path d="M811.8,88.1 v-3.1 l3.1,3.1 Z" fill="#f0f0f0"/>
<path d="M830.1,88.1 h-3.1 l3.1,-3.1 Z" fill="#f0f0f0"/>
<rect x="817.32" y="70.1" width="2.42" height="1.6" fill="#f0f0f0"/>
<rect x="817.32" y="86.5" width="2.42" height="1.6" fill="#f0f0f0"/>
<rect x="811.8" y="75.56" width="1.6" height="2.36" fill="#f0f0f0"/>
<rect x="828.5" y="75.56" width="1.6" height="2.36" fill="#f0f0f0"/>
<rect x="822.16" y="70.1" width="2.42" height="1.6" fill="#f0f0f0"/>
<rect x="822.16" y="86.5" width="2.42" height="1.6" fill="#f0f0f0"/>
<rect x="811.8" y="80.28" width="1.6" height="2.36" fill="#f0f0f0"/>
<rect x="828.5" y="80.28" width="1.6" height="2.36" fill="#f0f0f0"/>
<path d="M836.6,75.2 h5.1 v-5.1 h12.5 v12.7 h-4.9 v5.1 h-12.7 Z" fill="#c8c8c8"/>
<path d="M865.1,70.1 h12.9 v12.7 h-6.8 v-6.2 h-6.1 Z" fill="#c8c8c8"/>
<path d="M860,75.2 h2.6 l-2.6,2.6 Z" fill="#c8c8c8"/>
<path d="M860,87.8 v-2.6 l2.6,2.6 Z" fill="#c8c8c8"/>
<path d="M872.9,87.8 h-2.6 l2.6,-2.6 Z" fill="#c8c8c8"/>
<rect x="864.14" y="86.3" width="1.54" height="1.5" fill="#c8c8c8"/>
<rect x="860" y="79.28" width="1.5" height="1.48" fill="#c8c8c8"/>
<rect x="867.22" y="86.3" width="1.54" height="1.5" fill="#c8c8c8"/>
<rect x="860" y="82.24" width="1.5" height="1.48" fill="#c8c8c8"/>
<path d="M884.2,75.2 h5.1 v-5.1 h12.5 v12.7 h-4.9 v5.1 h-12.7 Z M889.3,75.2 v7.6 h7.6 v-7.6 Z" fill="#c8c8c8" fill-rule="evenodd"/>
<path d="M907.8,70.1 h3.1 l-3.1,3.1 Z" fill="#c8c8c8"/>
<path d="M925.8,70.1 v3.1 l-3.1,-3.1 Z" fill="#c8c8c8"/>
<path d="M907.8,88.1 v-3.1 l3.1,3.1 Z" fill="#c8c8c8"/>
<path d="M925.8,88.1 h-3.1 l3.1,-3.1 Z" fill="#c8c8c8"/>
<rect x="913.26" y="70.1" width="2.36" height="1.5" fill="#c8c8c8"/>
<rect x="913.26" y="86.6" width="2.36" height="1.5" fill="#c8c8c8"/>
<rect x="907.8" y="75.56" width="1.5" height="2.36" fill="#c8c8c8"/>
<rect x="924.3" y="75.56" width="1.5" height="2.36" fill="#c8c8c8"/>
<rect x="917.98" y="70.1" width="2.36" height="1.5" fill="#c8c8c8"/>
<rect x="917.98" y="86.6" width="2.36" height="1.5" fill="#c8c8c8"/>
<rect x="907.8" y="80.28" width="1.5" height="2.36" fill="#c8c8c8"/>
<rect x="924.3" y="80.28" width="1.5" height="2.36" fill="#c8c8c8"/>
<rect x="913.3" y="75.2" width="7.4" height="7.5" fill="#c8c8c8" rx="1"/>
<rect x="1491.5" y="67.5" width="79" height="22" fill="#282828" rx="4" stroke="#3a3a3a" stroke-width="1"/>
<text x="1500" y="83" fill="#e6e6e6" stroke="#e6e6e6">Options</text>
<path d="M1559.9,76.8 L1563.5,80.8 L1567.1,76.8" fill="none" stroke="#e6e6e6" stroke-width="1.3" stroke-linecap="round" stroke-linejoin="round"/>
<rect x="810.5" y="105.9" width="47" height="81.8" fill="#282828" rx="5" stroke="#363636" stroke-width="1"/>
<rect x="810" y="146.3" width="48" height="1" fill="#3a3a3a"/>
<rect x="810.5" y="197.2" width="47" height="169.4" fill="#282828" rx="5" stroke="#363636" stroke-width="1"/>
<rect x="810" y="238.8" width="48" height="1" fill="#3a3a3a"/>
<rect x="810" y="281.4" width="48" height="1" fill="#3a3a3a"/>
<rect x="810" y="324" width="48" height="1" fill="#3a3a3a"/>
<rect x="810.5" y="374.5" width="47" height="83.2" fill="#282828" rx="5" stroke="#363636" stroke-width="1"/>
<rect x="810" y="415.6" width="48" height="1" fill="#3a3a3a"/>
<rect x="810.5" y="467.3" width="47" height="39.5" fill="#282828" rx="5" stroke="#363636" stroke-width="1"/>
<rect x="810" y="105.4" width="48" height="41.4" fill="#4772b3" rx="5"/>
<rect x="810" y="136" width="48" height="10.8" fill="#4772b3"/>
<path d="M821.55,116.1 V113.55 H824.1 M843.9,113.55 H846.45 V116.1 M846.45,135.9 V138.45 H843.9 M824.1,138.45 H821.55 V135.9" fill="none" stroke="#f0b030" stroke-width="1.7"/>
<rect x="826.93" y="112.7" width="2.83" height="1.7" fill="#f0b030"/>
<rect x="826.93" y="137.6" width="2.83" height="1.7" fill="#f0b030"/>
<rect x="820.7" y="118.93" width="1.7" height="2.83" fill="#f0b030"/>
<rect x="845.6" y="118.93" width="1.7" height="2.83" fill="#f0b030"/>
<rect x="832.59" y="112.7" width="2.83" height="1.7" fill="#f0b030"/>
<rect x="832.59" y="137.6" width="2.83" height="1.7" fill="#f0b030"/>
<rect x="820.7" y="124.59" width="1.7" height="2.83" fill="#f0b030"/>
<rect x="845.6" y="124.59" width="1.7" height="2.83" fill="#f0b030"/>
<rect x="838.24" y="112.7" width="2.83" height="1.7" fill="#f0b030"/>
<rect x="838.24" y="137.6" width="2.83" height="1.7" fill="#f0b030"/>
<rect x="820.7" y="130.24" width="1.7" height="2.83" fill="#f0b030"/>
<rect x="845.6" y="130.24" width="1.7" height="2.83" fill="#f0b030"/>
<path d="M829.8,118.9 L839.6,127.7 L834.6,128.3 L830.3,133 Z" fill="#e0e0e0"/>
<path d="M855.1,139.8 L855.1,144.1 L850.7,144.1 Z" fill="#a8c0e0"/>
<circle cx="834" cy="167.7" r="13.6" fill="none" stroke="#ffffff" stroke-width="1.9"/>
<circle cx="834" cy="167.7" r="13.6" fill="none" stroke="#a02a2a" stroke-width="1.9" stroke-dasharray="5.34" stroke-dashoffset="2.67"/>
<line x1="825" y1="167.7" x2="830.8" y2="167.7" stroke="#8f8f8f" stroke-width="1.3"/>
<line x1="837.2" y1="167.7" x2="843" y2="167.7" stroke="#8f8f8f" stroke-width="1.3"/>
<line x1="834" y1="158.7" x2="834" y2="164.5" stroke="#8f8f8f" stroke-width="1.3"/>
<line x1="834" y1="170.9" x2="834" y2="176.7" stroke="#8f8f8f" stroke-width="1.3"/>
<path d="M833.8,203.4 L829.9,209.2 L837.7,209.2 Z" fill="#e0e0e0"/>
<line x1="833.8" y1="210.2" x2="833.8" y2="214.1" stroke="#e0e0e0" stroke-width="1.5"/>
<path d="M833.8,232.6 L829.9,226.8 L837.7,226.8 Z" fill="#e0e0e0"/>
<line x1="833.8" y1="225.8" x2="833.8" y2="221.9" stroke="#e0e0e0" stroke-width="1.5"/>
<path d="M819.2,218 L825,214.1 L825,221.9 Z" fill="#e0e0e0"/>
<line x1="826" y1="218" x2="829.9" y2="218" stroke="#e0e0e0" stroke-width="1.5"/>
<path d="M848.4,218 L842.6,214.1 L842.6,221.9 Z" fill="#e0e0e0"/>
<line x1="841.6" y1="218" x2="837.7" y2="218" stroke="#e0e0e0" stroke-width="1.5"/>
<path d="M823.28,256.67 A11.2,11.2 0 0 1 842.38,253.3" fill="none" stroke="#e0e0e0" stroke-width="1.4"/>
<path d="M844.32,264.33 A11.2,11.2 0 0 1 825.22,267.7" fill="none" stroke="#e0e0e0" stroke-width="1.4"/>
<path d="M818.5,260 h8.2 l-4.1,6.2 Z" fill="#e0e0e0"/>
<path d="M849.1,259.3 h-8.2 l4.1,-6.2 Z" fill="#e0e0e0"/>
<path d="M833.8,256.1 L838.2,260.5 L833.8,264.9 L829.4,260.5 Z" fill="#a8a8a8"/>
<path d="M823.6,302.5 V293.6 H844.4 V314 H835.7" fill="none" stroke="#b8b8b8" stroke-width="1.4"/>
<rect x="822.6" y="303.8" width="11.2" height="11.2" fill="#d8d8d8"/>
<line x1="835" y1="302.6" x2="840.1" y2="297.7" stroke="#d8d8d8" stroke-width="1.5"/>
<path d="M841.8,296 L841.3,301.5 L836.3,296.5 Z" fill="#d8d8d8"/>
<path d="M855.1,316.9 L855.1,321.2 L850.7,321.2 Z" fill="#9a9a9a"/>
<path d="M845.85,342.32 A12.6,12.6 0 0 0 837.48,333.95" fill="none" stroke="#e0e0e0" stroke-width="1.3"/>
<path d="M830.12,333.95 A12.6,12.6 0 0 0 821.75,342.32" fill="none" stroke="#e0e0e0" stroke-width="1.3"/>
<path d="M821.75,349.68 A12.6,12.6 0 0 0 830.12,358.05" fill="none" stroke="#e0e0e0" stroke-width="1.3"/>
<path d="M837.48,358.05 A12.6,12.6 0 0 0 845.85,349.68" fill="none" stroke="#e0e0e0" stroke-width="1.3"/>
<rect x="828.7" y="341.1" width="10.2" height="10" fill="#e0e0e0"/>
<path d="M833.8,332 l3.6,5 h-7.2 Z M833.8,360 l3.6,-5 h-7.2 Z M819.8,346 l5,3.6 v-7.2 Z M847.8,346 l-5,3.6 v-7.2 Z" fill="#e0e0e0"/>
<path d="M819.4,402.6 L824.66,401.62 L839.93,387.19 L835.94,382.98 L820.68,397.4 Z" fill="#e0e0e0"/>
<line x1="826.12" y1="400.24" x2="822.13" y2="396.03" stroke="#282828" stroke-width="1"/>
<line x1="837.02" y1="389.94" x2="833.03" y2="385.73" stroke="#282828" stroke-width="1"/>
<path d="M820.8,403.6 C826,408 834,406 837,401 C840,396 847,395 850,403.6" fill="none" stroke="#6cd0a0" stroke-width="1.5" stroke-linecap="round" stroke-linejoin="round"/>
<path d="M855.1,409.1 L855.1,413.4 L850.7,413.4 Z" fill="#9a9a9a"/>
<rect x="823" y="424.2" width="6.8" height="28.2" fill="#ececec"/>
<rect x="823" y="448.2" width="25.6" height="4.3" fill="#ececec"/>
<line x1="826.5" y1="427.5" x2="829.8" y2="427.5" stroke="#282828" stroke-width="0.8"/>
<line x1="826.5" y1="430.5" x2="829.8" y2="430.5" stroke="#282828" stroke-width="0.8"/>
<line x1="826.5" y1="433.5" x2="829.8" y2="433.5" stroke="#282828" stroke-width="0.8"/>
<line x1="826.5" y1="436.5" x2="829.8" y2="436.5" stroke="#282828" stroke-width="0.8"/>
<line x1="826.5" y1="439.5" x2="829.8" y2="439.5" stroke="#282828" stroke-width="0.8"/>
<line x1="826.5" y1="442.5" x2="829.8" y2="442.5" stroke="#282828" stroke-width="0.8"/>
<line x1="826.5" y1="445.5" x2="829.8" y2="445.5" stroke="#282828" stroke-width="0.8"/>
<line x1="832.5" y1="448.2" x2="832.5" y2="450.8" stroke="#282828" stroke-width="0.8"/>
<line x1="835.5" y1="448.2" x2="835.5" y2="450.8" stroke="#282828" stroke-width="0.8"/>
<line x1="838.5" y1="448.2" x2="838.5" y2="450.8" stroke="#282828" stroke-width="0.8"/>
<line x1="841.5" y1="448.2" x2="841.5" y2="450.8" stroke="#282828" stroke-width="0.8"/>
<line x1="844.5" y1="448.2" x2="844.5" y2="450.8" stroke="#282828" stroke-width="0.8"/>
<line x1="847.5" y1="448.2" x2="847.5" y2="450.8" stroke="#282828" stroke-width="0.8"/>
<path d="M829.8,448.2 V433.7 A14.5,14.5 0 0 1 844.3,448.2 Z" fill="#7dd3a8"/>
<path d="M830.5,431.6 A16.6,16.6 0 0 1 846.4,447.5" fill="none" stroke="#7dd3a8" stroke-width="1.2"/>
<path d="M818,476.1 h9.8 M822.9,471.2 v9.8" fill="none" stroke="#7dd3a8" stroke-width="2"/>
<rect x="825.5" y="483.6" width="17.2" height="17.1" fill="none" stroke="#7dd3a8" stroke-width="1.3"/>
<path d="M825.5,483.6 l6,-6 h17.2 v17.1 l-6,6 M842.7,483.6 l6,-6" fill="none" stroke="#7dd3a8" stroke-width="1.3"/>
<path d="M855.1,500.3 L855.1,504.6 L850.7,504.6 Z" fill="#9a9a9a"/>
<text x="880" y="118.8" fill="#e6e6e6" stroke="#e6e6e6">User Perspective</text>
<text x="880" y="140.8" fill="#e6e6e6" stroke="#e6e6e6">(1) Scene Collection</text>
<rect x="1019.6" y="126" width="1.5" height="18" fill="#e6e6e6"/>
<text x="1026.6" y="140.8" fill="#e6e6e6" stroke="#e6e6e6">Cube</text>
<line x1="1519" y1="155.7" x2="1519" y2="119" stroke="#2f83e3" stroke-width="2.2"/>
<line x1="1519" y1="155.7" x2="1494.4" y2="144" stroke="#6a9a2a" stroke-width="2.2"/>
<line x1="1519" y1="155.7" x2="1550.9" y2="146.7" stroke="#c03a50" stroke-width="2.2"/>
<circle cx="1487.3" cy="165" r="9.6" fill="#6b3c46" stroke="#e8405a" stroke-width="1.6"/>
<circle cx="1543" cy="167.6" r="9.6" fill="#4f6131" stroke="#8cd020" stroke-width="1.6"/>
<circle cx="1519" cy="193" r="9.2" fill="#3b4e66" stroke="#3a80d0" stroke-width="1.5"/>
<circle cx="1519" cy="119" r="10.2" fill="#2f83e3"/>
<circle cx="1494.4" cy="144" r="9.6" fill="#6a9a2a"/>
<circle cx="1550.9" cy="146.7" r="9.6" fill="#c03a50"/>
<text x="1519" y="123.8" text-anchor="middle" font-size="13.5" fill="#0c1f36" stroke="#0c1f36">Z</text>
<text x="1494.6" y="148.8" text-anchor="middle" font-size="13.5" fill="#17230a" stroke="#17230a">Y</text>
<text x="1551.1" y="151.5" text-anchor="middle" font-size="13.5" fill="#36101a" stroke="#36101a">X</text>
<circle cx="1553.1" cy="224.5" r="16.8" fill="#353535"/>
<circle cx="1555.4" cy="222.5" r="8.6" fill="#d4d4d4"/>
<path d="M1550.8,222.5 h9.2 M1555.4,217.9 v9.2" fill="none" stroke="#1e1e1e" stroke-width="1.4"/>
<line x1="1544.4" y1="233.6" x2="1549.7" y2="228.8" stroke="#d4d4d4" stroke-width="3" stroke-linecap="round"/>
<circle cx="1553.1" cy="261.2" r="16.8" fill="#353535"/>
<line x1="1549.8" y1="253.2" x2="1549.8" y2="260.2" stroke="#d4d4d4" stroke-width="2.8" stroke-linecap="round"/>
<line x1="1553.3" y1="251.2" x2="1553.3" y2="260.2" stroke="#d4d4d4" stroke-width="2.8" stroke-linecap="round"/>
<line x1="1556.6" y1="252.2" x2="1556.6" y2="260.2" stroke="#d4d4d4" stroke-width="2.8" stroke-linecap="round"/>
<line x1="1559.4" y1="255.7" x2="1559.4" y2="262.2" stroke="#d4d4d4" stroke-width="2.8" stroke-linecap="round"/>
<path d="M1547.9,259.2 L1560.7,259.2 L1560.1,266.2 Q1557.1,271.7 1552.1,270.7 Q1549.1,269.2 1542.6,262 Q1543.1,259.7 1545.6,260.4 L1548.6,263.2 Z" fill="#d4d4d4"/>
<circle cx="1553.1" cy="298.8" r="16.6" fill="#353535"/>
<circle cx="1547.5" cy="295.2" r="3.6" fill="none" stroke="#d4d4d4" stroke-width="1.3"/>
<circle cx="1547.5" cy="295.2" r="1" fill="#d4d4d4"/>
<circle cx="1556.8" cy="293.6" r="3" fill="none" stroke="#d4d4d4" stroke-width="1.3"/>
<circle cx="1556.8" cy="293.6" r="1" fill="#d4d4d4"/>
<path d="M1544,295.2 Q1544,290.4 1549,290.4 L1556,290.4 Q1561,290.4 1561,295 Q1561,299.4 1556,299.4 L1548,299.4 Q1544,299.4 1544,295.2" fill="none" stroke="#d4d4d4" stroke-width="1.2"/>
<rect x="1548.5" y="301.6" width="8.5" height="6.4" fill="none" rx="0.5" stroke="#d4d4d4" stroke-width="1.3"/>
<path d="M1557,304.8 L1562.5,301.8 V307.8 Z M1544,303 v3.6 M1544,304.8 h4.5" fill="none" stroke="#d4d4d4" stroke-width="1.2"/>
<circle cx="1553.1" cy="335.5" r="16.6" fill="#353535"/>
<path d="M1546.8,328 h12.6 l3.8,14.8 h-20.2 Z M1545.6,332.8 h15 M1544.4,337.8 h17.6 M1550.9,328 l-1.3,14.8 M1555.3,328 l1.3,14.8" fill="none" stroke="#d4d4d4" stroke-width="1.3" stroke-linecap="round" stroke-linejoin="round"/>
<rect x="1572" y="113" width="9" height="17" fill="#373737" rx="4"/>
<path d="M1578.6,116.6 L1574.4,121.5 L1578.6,126.4" fill="none" stroke="#8a8a8a" stroke-width="1.2" stroke-linecap="round" stroke-linejoin="round"/>
<rect x="1584" y="31" width="329.5" height="162" fill="#282828" rx="5"/>
<rect x="1584" y="31" width="329.5" height="33" fill="#282828" rx="5"/>
<rect x="1584" y="40" width="329.5" height="24" fill="#282828"/>
<path d="M1584,36.5 Q1584,31.5 1589,31.5 L1908.5,31.5 Q1913,31.5 1913,36 L1913,188 Q1913,192.5 1908.5,192.5 L1589,192.5 Q1584.5,192.5 1584.5,188 Z" fill="none" stroke="#3a3a3a" stroke-width="1"/>
<rect x="1594.5" y="34.5" width="39.5" height="24" fill="#282828" rx="4" stroke="#3a3a3a" stroke-width="1"/>
<rect x="1600.1" y="38.6" width="6.6" height="3.4" fill="#e6e6e6" rx="1.2"/>
<path d="M1603.6,41.8 V54 H1607.8 M1603.6,47.8 H1608" fill="none" stroke="#a8a8a8" stroke-width="1.1"/>
<rect x="1609" y="46.2" width="8.9" height="3.4" fill="#e6e6e6" rx="1.2"/>
<rect x="1609" y="52.1" width="8.9" height="3.5" fill="#e6e6e6" rx="1.2"/>
<path d="M1622,45.5 L1625.6,49.5 L1629.2,45.5" fill="none" stroke="#e6e6e6" stroke-width="1.3" stroke-linecap="round" stroke-linejoin="round"/>
<rect x="1640.5" y="34.5" width="39.5" height="24" fill="#282828" rx="4" stroke="#3a3a3a" stroke-width="1"/>
<path d="M1647.3,44 v10.2 h12.5" fill="none" stroke="#e6e6e6" stroke-width="1.2" opacity="0.7"/>
<path d="M1649.5,41.6 v10.6 h11.8" fill="none" stroke="#e6e6e6" stroke-width="1.2" opacity="0.85"/>
<rect x="1651.7" y="38.7" width="11.6" height="11.8" fill="#282828" rx="1" stroke="#e6e6e6" stroke-width="1.3"/>
<path d="M1652.4,49.8 L1655.8,43 L1659.3,49.8 Z" fill="#e6e6e6"/>
<circle cx="1660.5" cy="41.6" r="1.4" fill="#e6e6e6"/>
<path d="M1668,45.5 L1671.6,49.5 L1675.2,45.5" fill="none" stroke="#e6e6e6" stroke-width="1.3" stroke-linecap="round" stroke-linejoin="round"/>
<rect x="1700.3" y="34.5" width="146" height="24" fill="#1d1d1d" rx="5" stroke="#323232" stroke-width="1"/>
<circle cx="1716.4" cy="44.4" r="5.6" fill="none" stroke="#cfcfcf" stroke-width="1.3"/>
<line x1="1712.4" y1="48.6" x2="1705.4" y2="55.4" stroke="#cfcfcf" stroke-width="1.3" stroke-linecap="round"/>
<text x="1732.6" y="51.5" fill="#707070" stroke="#707070">Search</text>
<rect x="1866.5" y="34.5" width="39" height="24" fill="#282828" rx="4" stroke="#3a3a3a" stroke-width="1"/>
<path d="M1871.6,39 h16 l-5.9,6.9 v7.6 l-3.6,3.2 v-10.8 Z" fill="none" stroke="#e6e6e6" stroke-width="1.3" stroke-linecap="round" stroke-linejoin="round"/>
<path d="M1893.4,45.5 L1897,49.5 L1900.6,45.5" fill="none" stroke="#e6e6e6" stroke-width="1.3" stroke-linecap="round" stroke-linejoin="round"/>
<rect x="1909.5" y="34" width="3.5" height="25" fill="#3c3c3c" rx="1.5"/>
<rect x="1584.5" y="63.8" width="328" height="25" fill="#282828"/>
<rect x="1584.5" y="88.3" width="328" height="25" fill="#2c2c2c"/>
<rect x="1584.5" y="113" width="328" height="25" fill="#282828"/>
<rect x="1584.5" y="138" width="328" height="25" fill="#2c2c2c"/>
<rect x="1584.5" y="163" width="328" height="25" fill="#282828"/>
<rect x="1584.5" y="188" width="328" height="4.5" fill="#2c2c2c"/>
<rect x="1609.4" y="64.3" width="24.4" height="22.3" fill="#545454" rx="4.5" stroke="#5e5e5e" stroke-width="0.8"/>
<rect x="1612.2" y="66.7" width="17.7" height="4.2" fill="#e6e6e6" rx="0.8"/>
<rect x="1613.6" y="72.2" width="14.9" height="10" fill="#e6e6e6" rx="0.6"/>
<rect x="1619.3" y="74.6" width="3.3" height="1" fill="#545454"/>
<text x="1640" y="82.2" fill="#e6e6e6" stroke="#e6e6e6">Scene Collection</text>
<path d="M1618.4,95.9 L1624.4,101.2 L1618.4,106.5" fill="none" stroke="#a8a8a8" stroke-width="1.2" stroke-linecap="round" stroke-linejoin="round"/>
<path d="M1618.4,120.9 L1624.4,126.2 L1618.4,131.5" fill="none" stroke="#a8a8a8" stroke-width="1.2" stroke-linecap="round" stroke-linejoin="round"/>
<path d="M1618.4,170.9 L1624.4,176.2 L1618.4,181.5" fill="none" stroke="#a8a8a8" stroke-width="1.2" stroke-linecap="round" stroke-linejoin="round"/>
<rect x="1634.3" y="89.3" width="24.4" height="22.3" fill="#545454" rx="4.5" stroke="#5e5e5e" stroke-width="0.8"/>
<path d="M1639.1,94 L1653.7,94 L1646.3,108.8 Z" fill="none" stroke="#dd8f4f" stroke-width="2.7" stroke-linejoin="round"/>
<text x="1664.7" y="106.6" fill="#e6e6e6" stroke="#e6e6e6">Cube</text>
<path d="M1728,106.9 L1735,99.7 Q1733.8,95.7 1736.4,93.5 Q1738.2,91.9 1740,92.5 L1737.8,95.3 L1739.2,97.1 L1742,95.3 Q1743.2,98.5 1740.8,100.3 Q1738.6,101.7 1736.8,101.3 L1729.8,108.3 Q1728.2,109.1 1727.2,108.1 Q1726.8,107.5 1728,106.9 Z" fill="none" stroke="#6a98ea" stroke-width="1.3" stroke-linecap="round" stroke-linejoin="round"/>
<path d="M1753.7,93.5 L1766.4,93.5 L1760,106.2 Z" fill="none" stroke="#21c496" stroke-width="1.3"/>
<rect x="1752.1" y="91.9" width="3.2" height="3.2" fill="#282828" rx="0.6" stroke="#21c496" stroke-width="1.2"/>
<rect x="1764.8" y="91.9" width="3.2" height="3.2" fill="#282828" rx="0.6" stroke="#21c496" stroke-width="1.2"/>
<rect x="1758.4" y="104.6" width="3.2" height="3.2" fill="#282828" rx="0.6" stroke="#21c496" stroke-width="1.2"/>
<path d="M1639.1,119 L1653.7,119 L1646.3,133.8 Z" fill="none" stroke="#7d5637" stroke-width="2.7" stroke-linejoin="round"/>
<text x="1664.7" y="131.6" fill="#888888" stroke="#888888">Cube.001</text>
<path d="M1758.6,131.9 L1765.6,124.7 Q1764.4,120.7 1767,118.5 Q1768.8,116.9 1770.6,117.5 L1768.4,120.3 L1769.8,122.1 L1772.6,120.3 Q1773.8,123.5 1771.4,125.3 Q1769.2,126.7 1767.4,126.3 L1760.4,133.3 Q1758.8,134.1 1757.8,133.1 Q1757.4,132.5 1758.6,131.9 Z" fill="none" stroke="#4d6ca8" stroke-width="1.3" stroke-linecap="round" stroke-linejoin="round"/>
<path d="M1784.7,118.5 L1797.4,118.5 L1791,131.2 Z" fill="none" stroke="#1f8f70" stroke-width="1.3"/>
<rect x="1783.1" y="116.9" width="3.2" height="3.2" fill="#282828" rx="0.6" stroke="#1f8f70" stroke-width="1.2"/>
<rect x="1795.8" y="116.9" width="3.2" height="3.2" fill="#282828" rx="0.6" stroke="#1f8f70" stroke-width="1.2"/>
<rect x="1789.4" y="129.6" width="3.2" height="3.2" fill="#282828" rx="0.6" stroke="#1f8f70" stroke-width="1.2"/>
<path d="M1644.9,152.1 V143.4 M1644.9,152.1 H1653.6 M1644.9,152.1 L1638.4,158.6" fill="none" stroke="#7d5637" stroke-width="2.4" stroke-linecap="round" stroke-linejoin="round"/>
<text x="1664.7" y="156.6" fill="#888888" stroke="#888888">Empty</text>
<rect x="1637.1" y="167.1" width="17.9" height="17.4" fill="#7d5637" rx="1"/>
<path d="M1639.3,182.4 L1645,173.6 L1650.2,182.4 Z" fill="#282828"/>
<circle cx="1650.4" cy="171.2" r="1.5" fill="#282828"/>
<text x="1664.7" y="181.6" fill="#888888" stroke="#888888">Empty.001</text>
<rect x="1764.9" y="166.8" width="16.4" height="16.4" fill="none" rx="0.8" stroke="#6e3a44" stroke-width="1.2"/>
<rect x="1762" y="177" width="8" height="7" fill="#282828"/>
<path d="M1764.3,183.6 L1769.1,175.4 L1773.8,183.6 Z" fill="#6e3a44"/>
<circle cx="1776.4" cy="170.8" r="1.6" fill="#6e3a44"/>
<rect x="1637.1" y="190.5" width="17.9" height="2" fill="#7d5637" rx="1"/>
<path d="M1729.5,192.5 q0,-2.4 2.4,-2.4 h13 q2.4,0 2.4,2.4" fill="none" stroke="#1f8f70" stroke-width="1.2"/>
<path d="M1858,100.8 Q1866.3,89.8 1874.6,100.8 Q1866.3,111.8 1858,100.8 Z" fill="#e6e6e6"/>
<circle cx="1866.3" cy="100.8" r="3.5" fill="#282828"/>
<circle cx="1866.3" cy="100.8" r="2.2" fill="#e6e6e6"/>
<path d="M1882.6,97.1 q0,-0.8 0.8,-0.8 h3.2 l1.4,-2.4 q0.3,-0.5 0.9,-0.5 h5 q0.6,0 0.9,0.5 l1.4,2.4 h3.2 q0.8,0 0.8,0.8 v10 q0,0.8 -0.8,0.8 h-15.6 q-0.8,0 -0.8,-0.8 Z" fill="#e6e6e6"/>
<circle cx="1891.5" cy="101.4" r="4.4" fill="#2c2c2c"/>
<circle cx="1891.5" cy="101.4" r="3.3" fill="#e6e6e6"/>
<circle cx="1891.5" cy="101.4" r="1.8" fill="#2c2c2c"/>
<path d="M1882.6,122.1 q0,-0.8 0.8,-0.8 h3.2 l1.4,-2.4 q0.3,-0.5 0.9,-0.5 h5 q0.6,0 0.9,0.5 l1.4,2.4 h3.2 q0.8,0 0.8,0.8 v10 q0,0.8 -0.8,0.8 h-15.6 q-0.8,0 -0.8,-0.8 Z" fill="#e6e6e6"/>
<circle cx="1891.5" cy="126.4" r="4.4" fill="#282828"/>
<circle cx="1891.5" cy="126.4" r="3.3" fill="#e6e6e6"/>
<circle cx="1891.5" cy="126.4" r="1.8" fill="#282828"/>
<path d="M1882.6,147.1 q0,-0.8 0.8,-0.8 h3.2 l1.4,-2.4 q0.3,-0.5 0.9,-0.5 h5 q0.6,0 0.9,0.5 l1.4,2.4 h3.2 q0.8,0 0.8,0.8 v10 q0,0.8 -0.8,0.8 h-15.6 q-0.8,0 -0.8,-0.8 Z" fill="#e6e6e6"/>
<circle cx="1891.5" cy="151.4" r="4.4" fill="#2c2c2c"/>
<circle cx="1891.5" cy="151.4" r="3.3" fill="#e6e6e6"/>
<circle cx="1891.5" cy="151.4" r="1.8" fill="#2c2c2c"/>
<path d="M1882.6,172.1 q0,-0.8 0.8,-0.8 h3.2 l1.4,-2.4 q0.3,-0.5 0.9,-0.5 h5 q0.6,0 0.9,0.5 l1.4,2.4 h3.2 q0.8,0 0.8,0.8 v10 q0,0.8 -0.8,0.8 h-15.6 q-0.8,0 -0.8,-0.8 Z" fill="#e6e6e6"/>
<circle cx="1891.5" cy="176.4" r="4.4" fill="#282828"/>
<circle cx="1891.5" cy="176.4" r="3.3" fill="#e6e6e6"/>
<circle cx="1891.5" cy="176.4" r="1.8" fill="#282828"/>
<path d="M1858,125.8 Q1866.3,136.8 1874.6,125.8" fill="none" stroke="#9a9a9a" stroke-width="1.2"/>
<path d="M1858,150.8 Q1866.3,161.8 1874.6,150.8" fill="none" stroke="#9a9a9a" stroke-width="1.2"/>
<path d="M1858,175.8 Q1866.3,186.8 1874.6,175.8" fill="none" stroke="#9a9a9a" stroke-width="1.2"/>
<rect x="1908.3" y="72" width="4.3" height="82.4" fill="#3a3a3a" rx="2"/>
<rect x="1584" y="196" width="329.5" height="700" fill="#2e2e2e" rx="5"/>
<rect x="1584" y="196" width="329.5" height="31" fill="#303030" rx="5"/>
<rect x="1584" y="205" width="329.5" height="22" fill="#303030"/>
<path d="M1584.5,201 Q1584.5,196.5 1589,196.5 L1908.5,196.5 Q1913,196.5 1913,201 L1913,887" fill="none" stroke="#3a3a3a" stroke-width="1"/>
<rect x="1595" y="199.5" width="38" height="23.5" fill="#282828" rx="4" stroke="#3a3a3a" stroke-width="1"/>
<rect x="1600.2" y="203.2" width="17.8" height="7.6" fill="#e6e6e6" rx="3.8"/>
<rect x="1608.2" y="205" width="8.2" height="4" fill="#282828" rx="0.8"/>
<rect x="1600.2" y="213" width="17.8" height="7.8" fill="#e6e6e6" rx="3.9"/>
<rect x="1611.6" y="214.9" width="4.8" height="4" fill="#282828" rx="0.8"/>
<path d="M1622.2,209.2 L1625.8,213.2 L1629.4,209.2" fill="none" stroke="#e6e6e6" stroke-width="1.3" stroke-linecap="round" stroke-linejoin="round"/>
<rect x="1671.1" y="199.5" width="146" height="23.5" fill="#1d1d1d" rx="5" stroke="#323232" stroke-width="1"/>
<circle cx="1687.2" cy="209.4" r="5.6" fill="none" stroke="#cfcfcf" stroke-width="1.3"/>
<line x1="1683.2" y1="213.6" x2="1676.2" y2="220.4" stroke="#cfcfcf" stroke-width="1.3" stroke-linecap="round"/>
<text x="1703.4" y="216.2" fill="#707070" stroke="#707070">Search</text>
<rect x="1880.5" y="199.5" width="23.5" height="23.5" fill="#282828" rx="4" stroke="#3a3a3a" stroke-width="1"/>
<path d="M1888.6,209.4 L1892.2,213.4 L1895.8,209.4" fill="none" stroke="#e6e6e6" stroke-width="1.3" stroke-linecap="round" stroke-linejoin="round"/>
<rect x="1585" y="227" width="34" height="660" fill="#1c1c1c"/>
<rect x="1586" y="281.9" width="33" height="32.6" fill="#2e2e2e" rx="5"/>
<rect x="1612" y="281.9" width="7" height="32.6" fill="#2e2e2e"/>
<rect x="1585" y="711" width="34" height="1" fill="#222222"/>
<rect x="1595.6" y="246" width="1.6" height="8" fill="#a8a8a8" rx="0.8"/>
<rect x="1593" y="254.9" width="6.8" height="1.4" fill="#a8a8a8" rx="0.6"/>
<path d="M1594.4,256.6 h4 l0.6,1.2 q1.2,1 1.2,2.6 q0,3.4 -3.8,3.4 q-3.8,0 -3.8,-3.4 q0,-1.6 1.2,-2.6 Z" fill="#a8a8a8"/>
<path d="M1602,246.8 q-0.6,4.6 2.4,6.6 v8.4 q0,2 1.9,2 q1.9,0 1.9,-2 v-8.4 q3,-2 2.4,-6.6 l-2.4,-0.6 v3.6 q0,0.9 -0.9,0.9 h-2 q-0.9,0 -0.9,-0.9 v-3.6 Z" fill="#a8a8a8"/>
<circle cx="1606.3" cy="261.6" r="0.8" fill="#1d1d1d"/>
<path d="M1593.6,292.6 h6 l1,-1.8 h4.4 l1,1.8 h4.6 q0.8,0 0.8,0.8 v11.6 q0,0.8 -0.8,0.8 h-17 q-0.8,0 -0.8,-0.8 v-11.6 q0,-0.8 0.8,-0.8 Z" fill="#d8d8d8"/>
<rect x="1595" y="294.4" width="10.2" height="9.4" fill="#2e2e2e" rx="0.6"/>
<line x1="1596" y1="296.6" x2="1604.2" y2="296.6" stroke="#d8d8d8" stroke-width="0.9"/>
<line x1="1596" y1="299.2" x2="1604.2" y2="299.2" stroke="#d8d8d8" stroke-width="0.9"/>
<line x1="1596" y1="301.8" x2="1604.2" y2="301.8" stroke="#d8d8d8" stroke-width="0.9"/>
<circle cx="1608.2" cy="296.6" r="0.9" fill="#2e2e2e"/>
<circle cx="1608.2" cy="301.2" r="0.9" fill="#2e2e2e"/>
<circle cx="1609" cy="289.6" r="0.7" fill="#8a8a8a"/>
<rect x="1592.8" y="325.2" width="17.6" height="8" fill="#a8a8a8" rx="3"/>
<rect x="1596.8" y="332" width="10.4" height="10.8" fill="#a8a8a8"/>
<path d="M1598.6,341 l3.2,-4.4 l3.2,4.4 Z" fill="#1d1d1d"/>
<circle cx="1604.8" cy="335.6" r="0.9" fill="#1d1d1d"/>
<rect x="1594.8" y="331.6" width="14" height="1.2" fill="#1d1d1d"/>
<path d="M1593.8,367 v10.2 h12.5" fill="none" stroke="#a8a8a8" stroke-width="1.2" opacity="0.7"/>
<path d="M1596,364.6 v10.6 h11.8" fill="none" stroke="#a8a8a8" stroke-width="1.2" opacity="0.85"/>
<rect x="1598.2" y="361.7" width="11.6" height="11.8" fill="#1d1d1d" rx="1" stroke="#a8a8a8" stroke-width="1.3"/>
<path d="M1598.9,372.8 L1602.3,366 L1605.8,372.8 Z" fill="#a8a8a8"/>
<circle cx="1607" cy="364.6" r="1.4" fill="#a8a8a8"/>
<path d="M1598.8,396.7 Q1599.2,396.1 1599.6,396.7 L1602.8,402.9 L1599.4,411.1 Q1596,410.5 1593.3,408.7 Z" fill="#a8a8a8"/>
<circle cx="1608.3" cy="399.3" r="2.6" fill="#a8a8a8"/>
<circle cx="1605.6" cy="409.5" r="5.2" fill="#1d1d1d"/>
<circle cx="1605.6" cy="409.5" r="4.1" fill="none" stroke="#a8a8a8" stroke-width="1.3"/>
<path d="M1603.6,408.3 q0.6,-1 1.6,-1.4" fill="none" stroke="#a8a8a8" stroke-width="0.9" stroke-linecap="round" stroke-linejoin="round"/>
<circle cx="1602" cy="439" r="7.8" fill="none" stroke="#c0505f" stroke-width="1.4"/>
<path d="M1600.3,432.6 h3.6 q1.2,1.4 0,2.8 q-1.8,0.4 -3.2,1.6 l1.2,1.6 q2.2,-0.6 4.4,0.4 q1.4,1.6 0.6,3.6 q-1,2.2 -3.6,3 q-1.4,-1.4 -1.4,-3.6 q-1.6,-1.4 -3.2,-3.4 l-2,-2.8 q0.8,-2.4 3.6,-3.2 Z" fill="#c0505f"/>
<line x1="1593.6" y1="447.4" x2="1596.2" y2="444.8" stroke="#c0505f" stroke-width="1.5" stroke-linecap="round"/>
<line x1="1607.8" y1="433.2" x2="1610.4" y2="430.6" stroke="#c0505f" stroke-width="1.5" stroke-linecap="round"/>
<path d="M1593.4,477.6 v-3.2 q0,-0.8 0.8,-0.8 h3.2 M1606.6,473.6 h3.2 q0.8,0 0.8,0.8 v3.2 M1610.6,488.4 v3.2 q0,0.8 -0.8,0.8 h-3.2 M1597.4,492.4 h-3.2 q-0.8,0 -0.8,-0.8 v-3.2" fill="none" stroke="#8c5c36" stroke-width="1.5"/>
<rect x="1596.6" y="476.8" width="10.8" height="10.8" fill="#e0945a" rx="0.8"/>
<path d="M1594.6,525.2 L1601.6,518 Q1600.4,514 1603,511.8 Q1604.8,510.2 1606.6,510.8 L1604.4,513.6 L1605.8,515.4 L1608.6,513.6 Q1609.8,516.8 1607.4,518.6 Q1605.2,520 1603.4,519.6 L1596.4,526.6 Q1594.8,527.4 1593.8,526.4 Q1593.4,525.8 1594.6,525.2 Z" fill="none" stroke="#5a88de" stroke-width="1.3" stroke-linecap="round" stroke-linejoin="round"/>
<path d="M1594.6,525.2 L1601.6,518 Q1600.4,514 1603,511.8 Q1604.8,510.2 1606.6,510.8 L1604.4,513.6 L1605.8,515.4 L1608.6,513.6 Q1609.8,516.8 1607.4,518.6 Q1605.2,520 1603.4,519.6 L1596.4,526.6 Q1594.8,527.4 1593.8,526.4 Q1593.4,525.8 1594.6,525.2 Z" fill="#5a88de"/>
<circle cx="1596.3" cy="546.4" r="2.9" fill="#5a88de"/>
<line x1="1596.3" y1="549" x2="1596.3" y2="560.6" stroke="#5a88de" stroke-width="1.3"/>
<circle cx="1596.3" cy="561.2" r="1.7" fill="#5a88de"/>
<line x1="1598.8" y1="546.4" x2="1608.6" y2="546.4" stroke="#5a88de" stroke-width="1.3"/>
<circle cx="1608.8" cy="546.4" r="1.7" fill="#5a88de"/>
<line x1="1598.4" y1="548.6" x2="1607.4" y2="558.4" stroke="#5a88de" stroke-width="1.3"/>
<circle cx="1607.8" cy="559" r="2.5" fill="#5a88de"/>
<circle cx="1600.4" cy="589.2" r="3.6" fill="#5a88de"/>
<path d="M1608.4,592.6 A8.6,8.6 0 1 1 1604.4,581.4" fill="none" stroke="#5a88de" stroke-width="1.4"/>
<circle cx="1607.6" cy="582.6" r="2.2" fill="#5a88de"/>
<path d="M1593.6,626.4 Q1592.2,620.8 1596.6,617.4 L1604.8,612.4 Q1609.8,610.6 1610.4,614.2 Q1610.6,616.4 1608.6,619.2 L1603.6,626.6 Q1599.4,631.2 1595.4,628.8 Z" fill="none" stroke="#5a88de" stroke-width="1.4"/>
<circle cx="1599.6" cy="623.4" r="3.6" fill="none" stroke="#5a88de" stroke-width="1.4"/>
<circle cx="1599.6" cy="623.4" r="1.4" fill="#5a88de"/>
<circle cx="1606.4" cy="615.6" r="0.9" fill="#5a88de"/>
<path d="M1595.4,650.6 L1608.1,650.6 L1601.7,663.3 Z" fill="none" stroke="#21c496" stroke-width="1.3"/>
<rect x="1593.8" y="649" width="3.2" height="3.2" fill="#282828" rx="0.6" stroke="#21c496" stroke-width="1.2"/>
<rect x="1606.5" y="649" width="3.2" height="3.2" fill="#282828" rx="0.6" stroke="#21c496" stroke-width="1.2"/>
<rect x="1600.1" y="661.7" width="3.2" height="3.2" fill="#282828" rx="0.6" stroke="#21c496" stroke-width="1.2"/>
<circle cx="1601.8" cy="692.6" r="7.6" fill="#c06070"/>
<path d="M1601.8,692.6 h7.6 A7.6,7.6 0 0 1 1601.8,700.2 Z M1601.8,692.6 h-7.6 A7.6,7.6 0 0 1 1601.8,685 Z" fill="#1d1d1d"/>
<circle cx="1601.8" cy="692.6" r="7.6" fill="none" stroke="#c06070" stroke-width="1.2"/>
<rect x="1908.3" y="239" width="4.5" height="537" fill="#3a3a3a" rx="2.2"/>
<path d="M1637.8,242 Q1638.2,241.4 1638.6,242 L1641.8,248.2 L1638.4,256.4 Q1635,255.8 1632.3,254 Z" fill="#e6e6e6"/>
<circle cx="1647.3" cy="244.6" r="2.6" fill="#e6e6e6"/>
<circle cx="1644.6" cy="254.8" r="5.2" fill="#2e2e2e"/>
<circle cx="1644.6" cy="254.8" r="4.1" fill="none" stroke="#e6e6e6" stroke-width="1.3"/>
<path d="M1642.6,253.6 q0.6,-1 1.6,-1.4" fill="none" stroke="#e6e6e6" stroke-width="0.9" stroke-linecap="round" stroke-linejoin="round"/>
<text x="1662" y="253.2" fill="#e6e6e6" stroke="#e6e6e6">Scene</text>
<path d="M1897.6,241.4 L1902.5,246.1 L1898.7,249.3 L1896.6,255.3 L1888.1,247.6 L1894,245.4 Z" fill="none" stroke="#8f8f8f" stroke-width="1.3" stroke-linecap="round" stroke-linejoin="round"/>
<line x1="1885.6" y1="258" x2="1890.6" y2="253.2" stroke="#8f8f8f" stroke-width="1.3" stroke-linecap="round"/>
<text x="1641" y="299.2" fill="#e6e6e6" stroke="#e6e6e6">Render Engine</text>
<rect x="1746.1" y="283.1" width="158.8" height="22.8" fill="#282828" rx="4" stroke="#3a3a3a" stroke-width="1"/>
<text x="1755" y="299.2" fill="#e6e6e6" stroke="#e6e6e6">EEVEE</text>
<path d="M1894,293.2 L1897.6,297.2 L1901.2,293.2" fill="none" stroke="#e6e6e6" stroke-width="1.3" stroke-linecap="round" stroke-linejoin="round"/>
<rect x="1629" y="319" width="276.8" height="30.4" fill="#3d3d3d" rx="5"/>
<path d="M1643.2,329 L1648.8,334.2 L1643.2,339.4" fill="none" stroke="#c8c8c8" stroke-width="1.2" stroke-linecap="round" stroke-linejoin="round"/>
<text x="1656.4" y="339.7" fill="#e6e6e6" stroke="#e6e6e6">Sampling</text>
<rect x="1882.6" y="331.5" width="2" height="2" fill="#9a9a9a"/>
<rect x="1882.6" y="334.9" width="2" height="2" fill="#9a9a9a"/>
<rect x="1886.6" y="331.5" width="2" height="2" fill="#9a9a9a"/>
<rect x="1886.6" y="334.9" width="2" height="2" fill="#9a9a9a"/>
<rect x="1890.6" y="331.5" width="2" height="2" fill="#9a9a9a"/>
<rect x="1890.6" y="334.9" width="2" height="2" fill="#9a9a9a"/>
<rect x="1894.6" y="331.5" width="2" height="2" fill="#9a9a9a"/>
<rect x="1894.6" y="334.9" width="2" height="2" fill="#9a9a9a"/>
<rect x="1629" y="352.3" width="276.8" height="30.3" fill="#3d3d3d" rx="5"/>
<path d="M1643.2,362.25 L1648.8,367.45 L1643.2,372.65" fill="none" stroke="#c8c8c8" stroke-width="1.2" stroke-linecap="round" stroke-linejoin="round"/>
<text x="1656.4" y="373" fill="#e6e6e6" stroke="#e6e6e6">Clamping</text>
<rect x="1882.6" y="364.75" width="2" height="2" fill="#9a9a9a"/>
<rect x="1882.6" y="368.15" width="2" height="2" fill="#9a9a9a"/>
<rect x="1886.6" y="364.75" width="2" height="2" fill="#9a9a9a"/>
<rect x="1886.6" y="368.15" width="2" height="2" fill="#9a9a9a"/>
<rect x="1890.6" y="364.75" width="2" height="2" fill="#9a9a9a"/>
<rect x="1890.6" y="368.15" width="2" height="2" fill="#9a9a9a"/>
<rect x="1894.6" y="364.75" width="2" height="2" fill="#9a9a9a"/>
<rect x="1894.6" y="368.15" width="2" height="2" fill="#9a9a9a"/>
<rect x="1629" y="385" width="276.8" height="479.6" fill="#333333" rx="5"/>
<path d="M1629,580.5 V390 Q1629,385 1634,385 L1900.8,385 Q1905.8,385 1905.8,390 V580.5 Z" fill="#3d3d3d"/>
<path d="M1640,398.8 L1645,404.4 L1650,398.8" fill="none" stroke="#c8c8c8" stroke-width="1.2" stroke-linecap="round" stroke-linejoin="round"/>
<rect x="1655.3" y="393.2" width="16.6" height="16.6" fill="#4772b3" rx="3"/>
<path d="M1658.9,401.8 L1662.2,405.1 L1668.3,397.8" fill="none" stroke="#ffffff" stroke-width="2" stroke-linecap="round" stroke-linejoin="round"/>
<text x="1675.2" y="406.2" fill="#e6e6e6" stroke="#e6e6e6">Raytracing</text>
<circle cx="1854" cy="394.4" r="1.7" fill="#d8d8d8"/>
<line x1="1858" y1="394.4" x2="1869.6" y2="394.4" stroke="#d8d8d8" stroke-width="1.2"/>
<circle cx="1854" cy="401.2" r="1.7" fill="#d8d8d8"/>
<line x1="1858" y1="401.2" x2="1869.6" y2="401.2" stroke="#d8d8d8" stroke-width="1.2"/>
<circle cx="1854" cy="408" r="1.7" fill="#d8d8d8"/>
<line x1="1858" y1="408" x2="1869.6" y2="408" stroke="#d8d8d8" stroke-width="1.2"/>
<rect x="1882.6" y="398.6" width="2" height="2" fill="#9a9a9a"/>
<rect x="1882.6" y="402" width="2" height="2" fill="#9a9a9a"/>
<rect x="1886.6" y="398.6" width="2" height="2" fill="#9a9a9a"/>
<rect x="1886.6" y="402" width="2" height="2" fill="#9a9a9a"/>
<rect x="1890.6" y="398.6" width="2" height="2" fill="#9a9a9a"/>
<rect x="1890.6" y="402" width="2" height="2" fill="#9a9a9a"/>
<rect x="1894.6" y="398.6" width="2" height="2" fill="#9a9a9a"/>
<rect x="1894.6" y="402" width="2" height="2" fill="#9a9a9a"/>
<text x="1736.4" y="443.2" text-anchor="end" fill="#e6e6e6" stroke="#e6e6e6">Method</text>
<rect x="1748.7" y="427.7" width="145.4" height="21.6" fill="#282828" rx="4" stroke="#3a3a3a" stroke-width="1"/>
<text x="1757.2" y="443.2" fill="#e6e6e6" stroke="#e6e6e6">Screen - Trace</text>
<path d="M1884.3,437.1 L1887.6,440.9 L1890.9,437.1" fill="none" stroke="#e6e6e6" stroke-width="1.3" stroke-linecap="round" stroke-linejoin="round"/>
<text x="1736.4" y="470.2" text-anchor="end" fill="#e6e6e6" stroke="#e6e6e6">Resolution</text>
<rect x="1748.7" y="454.7" width="145.4" height="21.6" fill="#282828" rx="4" stroke="#3a3a3a" stroke-width="1"/>
<text x="1757.2" y="470.2" fill="#e6e6e6" stroke="#e6e6e6">1:2</text>
<path d="M1884.3,464.1 L1887.6,467.9 L1890.9,464.1" fill="none" stroke="#e6e6e6" stroke-width="1.3" stroke-linecap="round" stroke-linejoin="round"/>
<path d="M1660.2,499 L1665.8,504.2 L1660.2,509.4" fill="none" stroke="#c8c8c8" stroke-width="1.2" stroke-linecap="round" stroke-linejoin="round"/>
<text x="1673.7" y="508.8" fill="#e6e6e6" stroke="#e6e6e6">Screen Tracing</text>
<path d="M1660.2,530.1 L1665.8,535.3 L1660.2,540.5" fill="none" stroke="#c8c8c8" stroke-width="1.2" stroke-linecap="round" stroke-linejoin="round"/>
<rect x="1672.2" y="527.4" width="16.6" height="16.6" fill="#4772b3" rx="3"/>
<path d="M1675.8,536 L1679.1,539.3 L1685.2,532" fill="none" stroke="#ffffff" stroke-width="2" stroke-linecap="round" stroke-linejoin="round"/>
<text x="1692.3" y="540.3" fill="#e6e6e6" stroke="#e6e6e6">Denoising</text>
<path d="M1656.9,563.8 L1661.9,569.4 L1666.9,563.8" fill="none" stroke="#c8c8c8" stroke-width="1.2" stroke-linecap="round" stroke-linejoin="round"/>
<rect x="1672.2" y="558.3" width="16.6" height="16.6" fill="#4772b3" rx="3"/>
<path d="M1675.8,566.9 L1679.1,570.2 L1685.2,562.9" fill="none" stroke="#ffffff" stroke-width="2" stroke-linecap="round" stroke-linejoin="round"/>
<text x="1692.3" y="571.2" fill="#e6e6e6" stroke="#e6e6e6">Fast GI Approximation</text>
<text x="1736.4" y="608.4" text-anchor="end" fill="#e6e6e6" stroke="#e6e6e6">Threshold</text>
<rect x="1748.2" y="592" width="146.6" height="23" fill="#4772b3" rx="4"/>
<text x="1821.5" y="608.4" text-anchor="middle" fill="#e6e6e6" stroke="#e6e6e6">1.000</text>
<text x="1736.4" y="639.4" text-anchor="end" fill="#969696" stroke="#969696">Method</text>
<rect x="1748.7" y="623.5" width="145.6" height="22" fill="#2a2a2a" rx="4" stroke="#323232" stroke-width="1"/>
<text x="1757.2" y="639.4" fill="#969696" stroke="#969696">Global Illumination</text>
<path d="M1884.3,632.9 L1887.6,636.7 L1890.9,632.9" fill="none" stroke="#6a6a6a" stroke-width="1.1" stroke-linecap="round" stroke-linejoin="round"/>
<text x="1736.4" y="666.4" text-anchor="end" fill="#969696" stroke="#969696">Resolution</text>
<rect x="1748.7" y="650.9" width="145.6" height="21.4" fill="#2a2a2a" rx="4" stroke="#323232" stroke-width="1"/>
<text x="1757.2" y="666.4" fill="#969696" stroke="#969696">1:2</text>
<path d="M1884.3,660.1 L1887.6,663.9 L1890.9,660.1" fill="none" stroke="#6a6a6a" stroke-width="1.1" stroke-linecap="round" stroke-linejoin="round"/>
<rect x="1748.2" y="677.4" width="146.6" height="72.4" fill="#3e3e3e" rx="4"/>
<rect x="1748.2" y="699.6" width="146.6" height="1" fill="#333333"/>
<rect x="1748.2" y="724.8" width="146.6" height="1" fill="#333333"/>
<path d="M1748.2,725.8 H1783 V749.8 H1752.2 Q1748.2,749.8 1748.2,745.8 Z" fill="#4a5d7e"/>
<text x="1736.4" y="692.8" text-anchor="end" fill="#969696" stroke="#969696">Rays</text>
<text x="1821.5" y="692.8" text-anchor="middle" fill="#969696" stroke="#969696">2</text>
<text x="1736.4" y="717.8" text-anchor="end" fill="#969696" stroke="#969696">Steps</text>
<text x="1821.5" y="717.8" text-anchor="middle" fill="#969696" stroke="#969696">8</text>
<text x="1736.4" y="742.8" text-anchor="end" fill="#969696" stroke="#969696">Precision</text>
<text x="1821.5" y="742.8" text-anchor="middle" fill="#969696" stroke="#969696">0.250</text>
<rect x="1748.2" y="754.4" width="146.6" height="72.2" fill="#3e3e3e" rx="4"/>
<rect x="1748.2" y="777.2" width="146.6" height="1" fill="#333333"/>
<rect x="1748.2" y="802.2" width="146.6" height="1" fill="#333333"/>
<text x="1736.4" y="770" text-anchor="end" fill="#969696" stroke="#969696">Distance</text>
<text x="1821.5" y="770" text-anchor="middle" fill="#969696" stroke="#969696">0 m</text>
<text x="1736.4" y="795" text-anchor="end" fill="#969696" stroke="#969696">Thickness N...</text>
<text x="1821.5" y="795" text-anchor="middle" fill="#969696" stroke="#969696">0.25 m</text>
<text x="1736.4" y="820" text-anchor="end" fill="#969696" stroke="#969696">Far</text>
<text x="1821.5" y="820" text-anchor="middle" fill="#969696" stroke="#969696">45°</text>
<rect x="1748.2" y="831" width="146.6" height="23.2" fill="#3e3e3e" rx="4"/>
<path d="M1760,831 V854.2 H1752.2 Q1748.2,854.2 1748.2,850.2 V835 Q1748.2,831 1752.2,831 Z" fill="#4a5d7e"/>
<text x="1736.4" y="847.4" text-anchor="end" fill="#969696" stroke="#969696">Bias</text>
<text x="1821.5" y="847.4" text-anchor="middle" fill="#969696" stroke="#969696">0.05</text>
<rect x="1629" y="867.2" width="276.8" height="40" fill="#3d3d3d" rx="5"/>
<path d="M1643.2,876.8 L1648.8,882 L1643.2,887.2" fill="none" stroke="#c8c8c8" stroke-width="1.2" stroke-linecap="round" stroke-linejoin="round"/>
<text x="1656.4" y="888" fill="#e6e6e6" stroke="#e6e6e6">Volumes</text>
<rect x="1882.6" y="879.3" width="2" height="2" fill="#9a9a9a"/>
<rect x="1882.6" y="882.7" width="2" height="2" fill="#9a9a9a"/>
<rect x="1886.6" y="879.3" width="2" height="2" fill="#9a9a9a"/>
<rect x="1886.6" y="882.7" width="2" height="2" fill="#9a9a9a"/>
<rect x="1890.6" y="879.3" width="2" height="2" fill="#9a9a9a"/>
<rect x="1890.6" y="882.7" width="2" height="2" fill="#9a9a9a"/>
<rect x="1894.6" y="879.3" width="2" height="2" fill="#9a9a9a"/>
<rect x="1894.6" y="882.7" width="2" height="2" fill="#9a9a9a"/>
</svg></body></html>
